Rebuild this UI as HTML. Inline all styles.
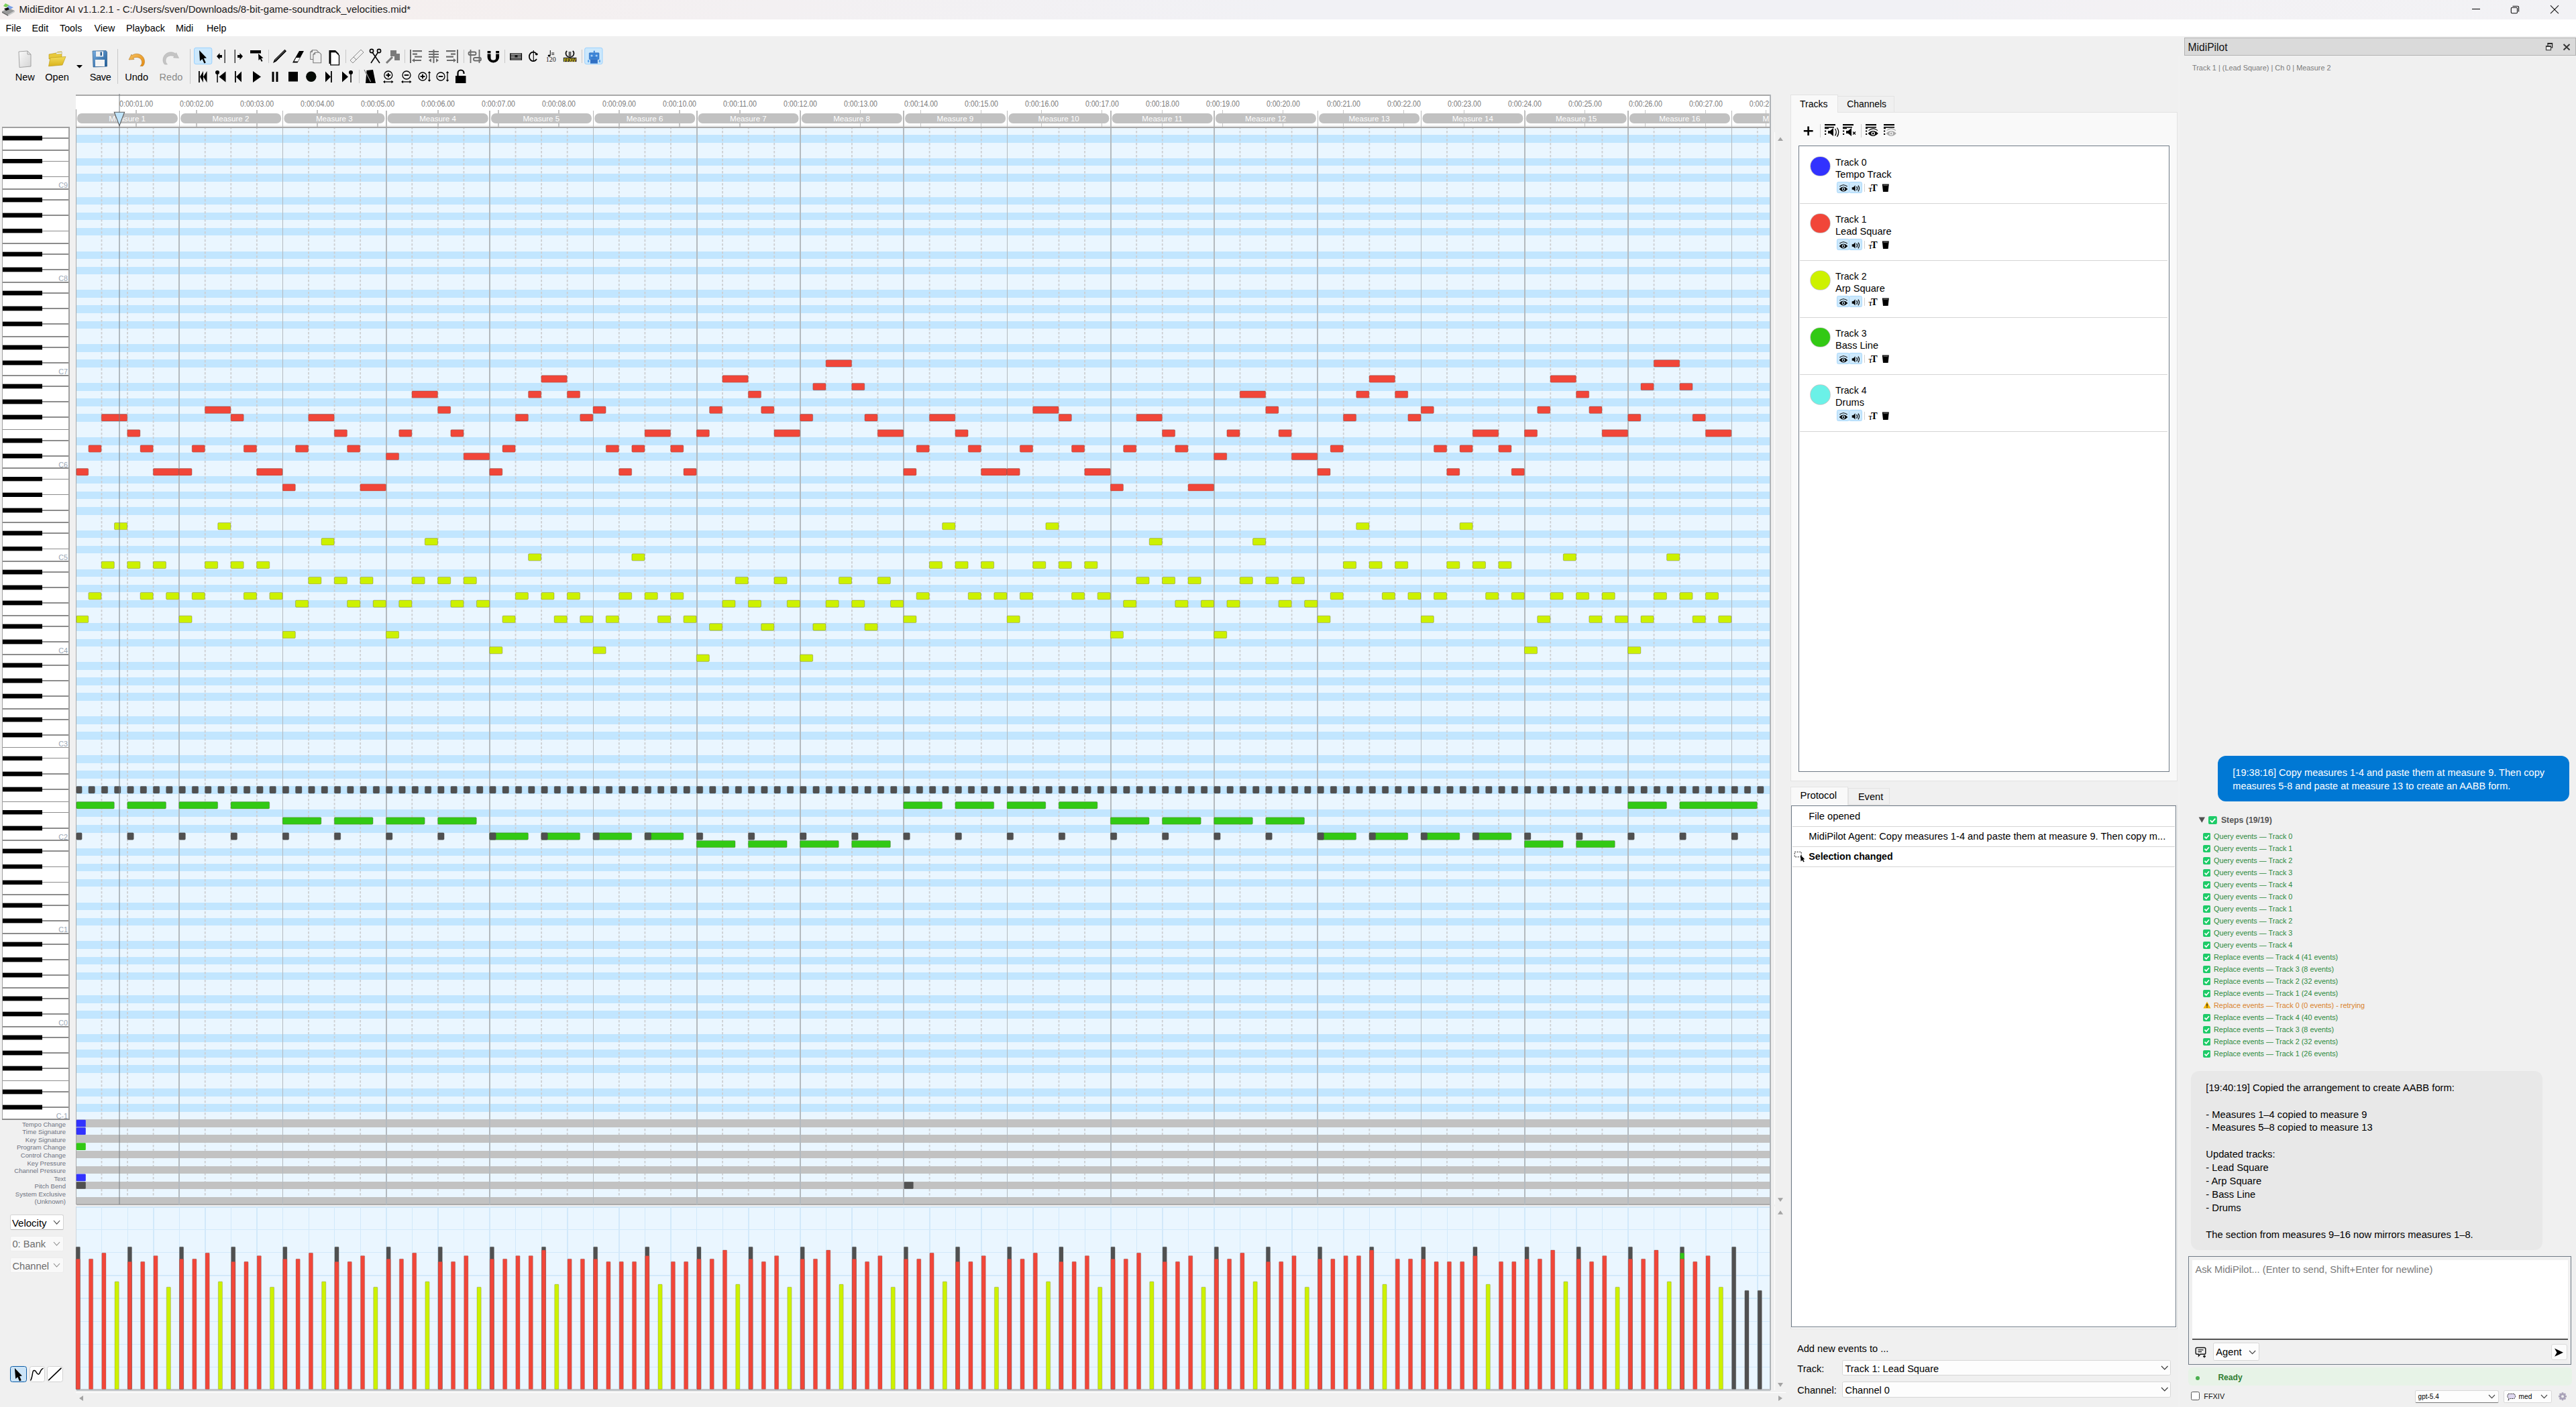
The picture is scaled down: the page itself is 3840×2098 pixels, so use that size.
<!DOCTYPE html><html><head><meta charset="utf-8"><style>
html,body{margin:0;padding:0}
body{width:3840px;height:2098px;overflow:hidden;position:relative;background:#f0f0f0;font-family:"Liberation Sans", sans-serif;}
.a{position:absolute}
.t{position:absolute;white-space:pre;line-height:1}

</style></head><body>
<div class="a" style="left:0;top:0;width:3840px;height:29px;background:linear-gradient(90deg,#f5efee 0%,#f5efee 12%,#f3f0f2 30%,#f1f1f5 50%,#f1f1f5 75%,#f3f1f4 82%,#f2f2f5 100%)"></div>
<div class="a" style="left:0;top:29px;width:3840px;height:25px;background:#ffffff"></div>
<div class="t" style="left:28.4px;top:7.34px;font-size:14.95px;color:#1a1a1a;font-weight:normal;">MidiEditor AI v1.1.2.1 - C:/Users/sven/Downloads/8-bit-game-soundtrack_velocities.mid*</div>
<svg class="a" style="left:1px;top:3px" width="22" height="22" viewBox="0 0 22 22">
<path d="M2,14 L12,9 L21,13 L11,19 Z" fill="#9a9a9a"/><path d="M2,14 L11,19 L11,21 L2,16 Z" fill="#6a6a6a"/><path d="M11,19 L21,13 L21,15 L11,21 Z" fill="#c8c8c8"/>
<path d="M7,2 L13,5 L8,8 L4,6 Z" fill="#7ccf5a"/><path d="M12,5 L19,8 L14,11 L9,9 Z" fill="#7aa0e8"/>
<path d="M5,10 L11,8 L13,11 L8,13 Z" fill="#111"/></svg>
<svg class="a" style="left:3670px;top:0" width="170" height="29" viewBox="3670 0 170 29" fill="none" stroke="#111" stroke-width="1.1">
<line x1="3685" y1="13.5" x2="3697" y2="13.5"/>
<rect x="3743.3" y="11.2" width="9.2" height="8.6" rx="1.5"/><path d="M3745.5,9.2 H3753 a1.6,1.6 0 0 1 1.6,1.6 V17.5"/>
<line x1="3802" y1="8.2" x2="3814" y2="20.2"/><line x1="3814" y1="8.2" x2="3802" y2="20.2"/></svg>
<div class="t" style="left:8.6px;top:35.40px;font-size:14.3px;color:#000;font-weight:normal;">File</div>
<div class="t" style="left:47.5px;top:35.40px;font-size:14.3px;color:#000;font-weight:normal;">Edit</div>
<div class="t" style="left:89.0px;top:35.40px;font-size:14.3px;color:#000;font-weight:normal;">Tools</div>
<div class="t" style="left:140.6px;top:35.40px;font-size:14.3px;color:#000;font-weight:normal;">View</div>
<div class="t" style="left:188.0px;top:35.40px;font-size:14.3px;color:#000;font-weight:normal;">Playback</div>
<div class="t" style="left:262.0px;top:35.40px;font-size:14.3px;color:#000;font-weight:normal;">Midi</div>
<div class="t" style="left:308.0px;top:35.40px;font-size:14.3px;color:#000;font-weight:normal;">Help</div>
<div class="t" style="left:22.7px;top:107.53px;font-size:14.5px;color:#000;font-weight:normal;">New</div>
<div class="t" style="left:67.3px;top:107.53px;font-size:14.5px;color:#000;font-weight:normal;">Open</div>
<div class="t" style="left:133.7px;top:107.53px;font-size:14.5px;color:#000;font-weight:normal;letter-spacing:-0.3px">Save</div>
<div class="t" style="left:186.3px;top:107.53px;font-size:14.5px;color:#000;font-weight:normal;">Undo</div>
<div class="t" style="left:237.6px;top:107.53px;font-size:14.5px;color:#8a8a8a;font-weight:normal;">Redo</div>

<svg class="a" style="left:0;top:54px" width="920" height="76" viewBox="0 54 920 76">
<defs>
<linearGradient id="gpage" x1="0" y1="0" x2="1" y2="1"><stop offset="0" stop-color="#fafafa"/><stop offset="1" stop-color="#d4d4d4"/></linearGradient>
<linearGradient id="gfold" x1="0" y1="0" x2="0" y2="1"><stop offset="0" stop-color="#f3dc5a"/><stop offset="1" stop-color="#d9b21a"/></linearGradient>
<linearGradient id="gsave" x1="0" y1="0" x2="1" y2="1"><stop offset="0" stop-color="#7aaee0"/><stop offset="1" stop-color="#1f5a94"/></linearGradient>
<linearGradient id="gundo" x1="0" y1="0" x2="1" y2="1"><stop offset="0" stop-color="#f6c060"/><stop offset="1" stop-color="#e48a10"/></linearGradient>
</defs>
<path d="M28,77 L41,76 L46,81 L46,99 L29,100.5 Z" fill="url(#gpage)" stroke="#9a9a9a" stroke-width="0.9"/>
<path d="M41,76 L41,81 L46,81" fill="none" stroke="#9a9a9a" stroke-width="0.9"/>
<path d="M73,81 L84,79 L86,77.5 L92,77 L92,86 L73,88 Z" fill="#e8c93a" stroke="#b69414" stroke-width="0.6"/>
<path d="M84,78.5 L92,78 L92,80 L84,80.5 Z" fill="#ffffff" stroke="#9aa" stroke-width="0.4"/>
<path d="M72.5,98.8 L75,86 L98,84.5 L93,97 Z" fill="url(#gfold)" stroke="#b69414" stroke-width="0.6"/>
<path d="M114,97 L123,97 L118.5,101.7 Z" fill="#000"/>
<path d="M138,76 L158,75.5 L159.5,77.5 L159.5,99 L139,100 Z" fill="url(#gsave)" stroke="#1c4f80" stroke-width="0.6"/>
<rect x="143" y="76.5" width="11" height="8" fill="#f0f0f0"/><rect x="149.5" y="77.5" width="2.5" height="5.5" fill="#2b5f92"/>
<rect x="142" y="89" width="14" height="10" fill="#f4f4f4"/>
<path d="M196,81 L192,89 L200,88.5 L198.5,86.5 C204,84 211,86 211.5,92 C212,95 210.5,97 209,98.5 L213,98.5 C216.5,95 216.5,88 212,83.5 C207,79 200,79.5 196.5,83 Z" fill="url(#gundo)" stroke="#a86a10" stroke-width="0.5"/>
<path d="M262.5,78.5 L266.5,86.5 L258.5,86 L260,84 C254.5,81.5 247.5,83.5 247,89.5 C246.5,92.5 248,94.5 249.5,96 L245.5,96 C242,92.5 242,85.5 246.5,81 C251.5,76.5 258.5,77 262,80.5 Z" fill="#c4c4c4" stroke="#a8a8a8" stroke-width="0.5"/>
<g stroke="#c8c8c8" stroke-width="1"><line x1="175.5" y1="73" x2="175.5" y2="125"/><line x1="283.5" y1="73" x2="283.5" y2="125"/>
<line x1="400.5" y1="74" x2="400.5" y2="94"/><line x1="515.5" y1="74" x2="515.5" y2="94"/><line x1="603.5" y1="74" x2="603.5" y2="94"/><line x1="691.5" y1="74" x2="691.5" y2="94"/><line x1="752.5" y1="74" x2="752.5" y2="94"/><line x1="867.5" y1="74" x2="867.5" y2="94"/><line x1="535.5" y1="104" x2="535.5" y2="124"/></g>
<rect x="289.5" y="71.3" width="26.3" height="24.3" rx="2.5" fill="#cce8fc" stroke="#99d1ff" stroke-width="1"/>
<rect x="871.7" y="71.3" width="26.3" height="24.3" rx="2.5" fill="#cce8fc" stroke="#99d1ff" stroke-width="1"/>
<path d="M297,75 L298,91 L301.5,88 L304.5,94.5 L306.8,93.5 L303.8,87 L308,86.5 Z" fill="#000"/>
<path d="M323,84 L327.5,79 L327.5,82 L331,82 L331,86 L327.5,86 L327.5,89 Z" fill="#000"/><rect x="334.5" y="74" width="1.3" height="20" fill="#222"/>
<path d="M362,84 L357.5,79 L357.5,82 L354,82 L354,86 L357.5,86 L357.5,89 Z" fill="#000"/><rect x="349.6" y="74" width="1.3" height="20" fill="#222"/>
<rect x="373" y="75" width="16" height="4.5" fill="#000"/><path d="M385,80 L385.5,90 L387.8,88 L389.8,92 L391.5,91 L389.4,87 L392.5,86.6 Z" fill="#000"/>
<path d="M407,94 L409,89 L424.5,73.8 L427,76.3 L411.5,91.8 Z" fill="#000"/><path d="M410,90 L424.8,75.5" stroke="#f0f0f0" stroke-width="0.6"/>
<path d="M436,93.5 L446,76 L453,76 L443.5,93.5 Z" fill="#000"/><path d="M438.5,91.5 L441.5,86 L447,86 L444,91.5 Z" fill="#fff"/>
<g fill="#f0f0f0" stroke="#7a7a7a" stroke-width="1.1"><path d="M462.8,88.5 V77.5 L465.5,74.8 H472 L474.5,77.5 V88.5 Z"/><path d="M466.9,93.8 V81 L469.6,78.2 H476 L478.6,81 V93.8 Z"/></g><path d="M465.5,74.8 V77.5 H462.8 M469.6,78.2 V81 H466.9" fill="none" stroke="#7a7a7a" stroke-width="1"/>
<path d="M490.5,95 V75 H500 L505,80 V95 Z" fill="#000"/><path d="M492.8,96.8 H505.5 V82.5 L500.5,77.5 H492.8 Z" fill="#fff" stroke="#000" stroke-width="1.3"/>
<path d="M522,90 L538,74 L542,78 L526,94 Z" fill="none" stroke="#8a8a8a" stroke-width="1"/><line x1="527" y1="85" x2="531" y2="89" stroke="#8a8a8a"/>
<g stroke="#000" stroke-width="1.6" fill="none"><line x1="553" y1="94" x2="563.5" y2="78"/><line x1="566" y1="94" x2="555" y2="78"/><circle cx="554" cy="76" r="2.6"/><circle cx="565" cy="76" r="2.6"/></g>
<rect x="582" y="75" width="9" height="9" fill="#7a7a7a"/><rect x="588" y="80" width="8" height="10" fill="#7a7a7a"/><path d="M576,94 L585,85" stroke="#7a7a7a" stroke-width="3"/>
<g fill="#6a6a6a"><rect x="611" y="74" width="2" height="20"/><rect x="615" y="75" width="14" height="2.2"/><rect x="615" y="79.5" width="7" height="2.2"/><rect x="618" y="83.5" width="11" height="2.2"/><path d="M614,90 L618,87 V89 H628 V91 H618 V93 Z"/>
<rect x="645.5" y="74" width="2" height="20"/><rect x="639" y="76" width="15" height="2"/><rect x="639" y="80" width="15" height="2"/><rect x="639" y="84" width="15" height="2"/><path d="M639,90 L643,87 V93 Z M654,90 L650,87 V93 Z"/>
<rect x="681" y="74" width="2" height="20"/><rect x="665" y="75" width="14" height="2.2"/><rect x="672" y="79.5" width="7" height="2.2"/><rect x="665" y="83.5" width="11" height="2.2"/><path d="M680,90 L676,87 V89 H666 V91 H676 V93 Z"/></g>
<g fill="none" stroke="#6a6a6a" stroke-width="1.8"><line x1="701.5" y1="74" x2="701.5" y2="94"/><line x1="714.5" y1="74" x2="714.5" y2="94"/><rect x="698.5" y="77.5" width="11" height="4.5" rx="2"/><rect x="706" y="86" width="11" height="4.5" rx="2"/></g>
<path d="M726.6,76 H731.5 V86 A3.85,3.85 0 0 0 739.2,86 V76 H744.1 V85.2 A8.75,8.2 0 0 1 726.6,85.2 Z" fill="#000"/>
<rect x="726" y="79.3" width="6" height="1.2" fill="#f0f0f0"/><rect x="738.6" y="79.3" width="6" height="1.2" fill="#f0f0f0"/>
<g fill="#000"><rect x="760.5" y="79.5" width="17.5" height="1.2"/><rect x="760.5" y="81.8" width="17.5" height="1.2"/><rect x="760.5" y="84.1" width="17.5" height="1.2"/><rect x="760.5" y="86.4" width="17.5" height="1.2"/><rect x="760.5" y="88.4" width="17.5" height="1.2"/>
<rect x="760.2" y="79.5" width="1.3" height="10"/><rect x="776.8" y="79.5" width="1.3" height="10"/><rect x="767.5" y="83.2" width="4" height="2.2"/></g>
<path d="M799.5,80 A6,6.8 0 1 0 800,88" fill="none" stroke="#000" stroke-width="1.7"/><line x1="795.3" y1="75" x2="795.3" y2="91" stroke="#000" stroke-width="1.1"/><ellipse cx="799.8" cy="80.8" rx="2" ry="1.6" fill="#000"/>
<text x="813.8" y="91.8" font-family="&quot;Liberation Serif&quot;,serif" font-size="10" fill="#222">120</text><path d="M820.3,75 V82.5" stroke="#000" stroke-width="1"/><ellipse cx="818.6" cy="83" rx="2" ry="1.5" fill="#000"/><path d="M822.2,79 h4 M822.2,81.2 h4" stroke="#000" stroke-width="0.9"/>
<path d="M845.2,75.8 C842.5,78 842.5,84.5 849.5,85.2 C856.5,84.5 856.5,78 853.8,75.8" fill="none" stroke="#111" stroke-width="1.7"/><rect x="847.6" y="77" width="3.8" height="8" fill="#777"/><path d="M848.5,77 V85 M850.5,77 V85" stroke="#333" stroke-width="0.5"/>
<rect x="839.8" y="85.8" width="19.6" height="6.3" fill="#222"/><text x="840.6" y="91.6" font-family="&quot;Liberation Sans&quot;,sans-serif" font-size="6.6" font-weight="bold" fill="#e6d41c" textLength="18" lengthAdjust="spacingAndGlyphs">FFXIV</text>
<g><rect x="878.3" y="78.8" width="14.7" height="9.8" rx="0.8" fill="#3d86d9" stroke="#2a64b0" stroke-width="0.6"/><rect x="884.8" y="75.5" width="2" height="3.5" rx="0.8" fill="#3d86d9"/><circle cx="882" cy="83" r="1.6" fill="#a9cdf2"/><circle cx="889.2" cy="83" r="1.6" fill="#a9cdf2"/><rect x="881.5" y="85.8" width="8" height="0.8" fill="#2a64b0"/>
<rect x="880" y="88.6" width="10.9" height="6" fill="#2f6fc4"/><rect x="876" y="89.2" width="2.5" height="3.8" rx="0.8" fill="#62a8ec"/><rect x="892.6" y="89.2" width="2.5" height="3.8" rx="0.8" fill="#62a8ec"/></g>
<g fill="#000">
<rect x="296" y="106" width="1.8" height="17"/><path d="M298,114.5 L303,106 V123 Z M303,114.5 L308.5,106 V123 Z"/>
<circle cx="324" cy="108" r="3"/><rect x="323.3" y="108" width="1.5" height="15"/><path d="M326.5,114.5 L336.5,106.5 V122.5 Z"/>
<rect x="350" y="106" width="1.8" height="17"/><path d="M352,114.5 L360,106.5 V122.5 Z"/>
<path d="M377,106 L389,114.5 L377,123 Z"/>
<rect x="405.5" y="107" width="3" height="15" rx="0.6"/><rect x="411.5" y="107" width="3" height="15" rx="0.6"/>
<rect x="430" y="107" width="14" height="14.5"/>
<circle cx="463.8" cy="114.3" r="7.7" fill="#050a05"/>
<path d="M485,106.5 L493,114.5 L485,122.5 Z"/><rect x="493" y="106" width="1.8" height="17"/>
<path d="M510,106.5 L519,114.5 L510,122.5 Z"/><circle cx="523" cy="108" r="3"/><rect x="522.3" y="108" width="1.5" height="15"/>
<path d="M546.5,105 L556,104 L560,124 L545,124 Z"/></g>
<path d="M543.5,104.5 L552.5,122" stroke="#f0f0f0" stroke-width="1.2"/><path d="M543,104 L552,122" stroke="#000" stroke-width="0.6"/>
<g fill="none" stroke="#000" stroke-width="1.3">
<circle cx="578.8" cy="112" r="6"/><path d="M575.5,112 h6.6 M578.8,108.7 v6.6" stroke-width="1.9"/><path d="M572.5,122 h12.5"/>
<circle cx="606" cy="112" r="6"/><path d="M602.7,112 h6.6" stroke-width="1.9"/><path d="M599.5,122 h12.5"/>
<circle cx="630" cy="114" r="6"/><path d="M626.7,114 h6.6 M630,110.7 v6.6" stroke-width="1.9"/><path d="M640,108 v12"/>
<circle cx="657" cy="114" r="6"/><path d="M653.7,114 h6.6" stroke-width="1.9"/><path d="M667,108 v12"/></g>
<g fill="#000"><path d="M571,122 l3,-2.2 v4.4 Z M586.5,122 l-3,-2.2 v4.4 Z M598,122 l3,-2.2 v4.4 Z M613.5,122 l-3,-2.2 v4.4 Z M640,106 l-2.2,3 h4.4 Z M640,122 l-2.2,-3 h4.4 Z M667,106 l-2.2,3 h4.4 Z M667,122 l-2.2,-3 h4.4 Z"/>
<rect x="679" y="113" width="15.5" height="11"/></g>
<path d="M682.5,113 V109 A4.5,4.5 0 0 1 691.5,109 V110" fill="none" stroke="#000" stroke-width="2.2"/>
</svg>
<svg class="a" style="left:0;top:0" width="2670" height="2098" viewBox="0 0 2670 2098">
<g shape-rendering="crispEdges">
<rect x="113" y="141" width="2526.6" height="50" fill="#ffffff"/>
<rect x="113" y="186.5" width="2525.6" height="3" fill="#ededed"/>
<rect x="113" y="141" width="2526.6" height="2" fill="#a9a9a9"/>
<rect x="113" y="163" width="1.2" height="28" fill="#a0a0a0"/>
<rect x="2637.6" y="141" width="2" height="1931.6" fill="#b0b4b8"/>
</g>
<g shape-rendering="crispEdges">
<rect x="266.57" y="164.5" width="1.6" height="26" fill="#b9b9b9"/>
<rect x="420.84" y="164.5" width="1.6" height="26" fill="#b9b9b9"/>
<rect x="575.12" y="164.5" width="1.6" height="26" fill="#b9b9b9"/>
<rect x="729.39" y="164.5" width="1.6" height="26" fill="#b9b9b9"/>
<rect x="883.66" y="164.5" width="1.6" height="26" fill="#b9b9b9"/>
<rect x="1037.93" y="164.5" width="1.6" height="26" fill="#b9b9b9"/>
<rect x="1192.20" y="164.5" width="1.6" height="26" fill="#b9b9b9"/>
<rect x="1346.48" y="164.5" width="1.6" height="26" fill="#b9b9b9"/>
<rect x="1500.75" y="164.5" width="1.6" height="26" fill="#b9b9b9"/>
<rect x="1655.02" y="164.5" width="1.6" height="26" fill="#b9b9b9"/>
<rect x="1809.29" y="164.5" width="1.6" height="26" fill="#b9b9b9"/>
<rect x="1963.56" y="164.5" width="1.6" height="26" fill="#b9b9b9"/>
<rect x="2117.84" y="164.5" width="1.6" height="26" fill="#b9b9b9"/>
<rect x="2272.11" y="164.5" width="1.6" height="26" fill="#b9b9b9"/>
<rect x="2426.38" y="164.5" width="1.6" height="26" fill="#b9b9b9"/>
<rect x="2580.65" y="164.5" width="1.6" height="26" fill="#b9b9b9"/>
<rect x="201.99" y="163.5" width="1.6" height="27" fill="#c4c4c4"/>
<rect x="291.98" y="163.5" width="1.6" height="27" fill="#c4c4c4"/>
<rect x="381.97" y="163.5" width="1.6" height="27" fill="#c4c4c4"/>
<rect x="471.96" y="163.5" width="1.6" height="27" fill="#c4c4c4"/>
<rect x="561.95" y="163.5" width="1.6" height="27" fill="#c4c4c4"/>
<rect x="651.95" y="163.5" width="1.6" height="27" fill="#c4c4c4"/>
<rect x="741.94" y="163.5" width="1.6" height="27" fill="#c4c4c4"/>
<rect x="831.93" y="163.5" width="1.6" height="27" fill="#c4c4c4"/>
<rect x="921.92" y="163.5" width="1.6" height="27" fill="#c4c4c4"/>
<rect x="1011.91" y="163.5" width="1.6" height="27" fill="#c4c4c4"/>
<rect x="1101.90" y="163.5" width="1.6" height="27" fill="#c4c4c4"/>
<rect x="1191.89" y="163.5" width="1.6" height="27" fill="#c4c4c4"/>
<rect x="1281.88" y="163.5" width="1.6" height="27" fill="#c4c4c4"/>
<rect x="1371.87" y="163.5" width="1.6" height="27" fill="#c4c4c4"/>
<rect x="1461.86" y="163.5" width="1.6" height="27" fill="#c4c4c4"/>
<rect x="1551.85" y="163.5" width="1.6" height="27" fill="#c4c4c4"/>
<rect x="1641.84" y="163.5" width="1.6" height="27" fill="#c4c4c4"/>
<rect x="1731.84" y="163.5" width="1.6" height="27" fill="#c4c4c4"/>
<rect x="1821.83" y="163.5" width="1.6" height="27" fill="#c4c4c4"/>
<rect x="1911.82" y="163.5" width="1.6" height="27" fill="#c4c4c4"/>
<rect x="2001.81" y="163.5" width="1.6" height="27" fill="#c4c4c4"/>
<rect x="2091.80" y="163.5" width="1.6" height="27" fill="#c4c4c4"/>
<rect x="2181.79" y="163.5" width="1.6" height="27" fill="#c4c4c4"/>
<rect x="2271.78" y="163.5" width="1.6" height="27" fill="#c4c4c4"/>
<rect x="2361.77" y="163.5" width="1.6" height="27" fill="#c4c4c4"/>
<rect x="2451.76" y="163.5" width="1.6" height="27" fill="#c4c4c4"/>
<rect x="2541.75" y="163.5" width="1.6" height="27" fill="#c4c4c4"/>
<rect x="2631.74" y="163.5" width="1.6" height="27" fill="#c4c4c4"/>
</g>
<rect x="114.90" y="169" width="149.97" height="15" rx="7" fill="#c1c1c1"/>
<rect x="269.17" y="169" width="149.97" height="15" rx="7" fill="#c1c1c1"/>
<rect x="423.44" y="169" width="149.97" height="15" rx="7" fill="#c1c1c1"/>
<rect x="577.72" y="169" width="149.97" height="15" rx="7" fill="#c1c1c1"/>
<rect x="731.99" y="169" width="149.97" height="15" rx="7" fill="#c1c1c1"/>
<rect x="886.26" y="169" width="149.97" height="15" rx="7" fill="#c1c1c1"/>
<rect x="1040.53" y="169" width="149.97" height="15" rx="7" fill="#c1c1c1"/>
<rect x="1194.80" y="169" width="149.97" height="15" rx="7" fill="#c1c1c1"/>
<rect x="1349.08" y="169" width="149.97" height="15" rx="7" fill="#c1c1c1"/>
<rect x="1503.35" y="169" width="149.97" height="15" rx="7" fill="#c1c1c1"/>
<rect x="1657.62" y="169" width="149.97" height="15" rx="7" fill="#c1c1c1"/>
<rect x="1811.89" y="169" width="149.97" height="15" rx="7" fill="#c1c1c1"/>
<rect x="1966.16" y="169" width="149.97" height="15" rx="7" fill="#c1c1c1"/>
<rect x="2120.44" y="169" width="149.97" height="15" rx="7" fill="#c1c1c1"/>
<rect x="2274.71" y="169" width="149.97" height="15" rx="7" fill="#c1c1c1"/>
<rect x="2428.98" y="169" width="149.97" height="15" rx="7" fill="#c1c1c1"/>
<path d="M2590.25,169 H2637.60 V184 H2590.25 A7,7.5 0 0 1 2590.25,169 Z" fill="#c1c1c1"/>
<defs><clipPath id="rclip"><rect x="113" y="140" width="2524.1" height="52"/></clipPath></defs>
<g font-family="&quot;Liberation Sans&quot;, sans-serif" font-size="11.6" fill="#ffffff" text-anchor="middle" clip-path="url(#rclip)">
<text x="189.7" y="180.5">Measure 1</text>
<text x="344.0" y="180.5">Measure 2</text>
<text x="498.3" y="180.5">Measure 3</text>
<text x="652.6" y="180.5">Measure 4</text>
<text x="806.8" y="180.5">Measure 5</text>
<text x="961.1" y="180.5">Measure 6</text>
<text x="1115.4" y="180.5">Measure 7</text>
<text x="1269.6" y="180.5">Measure 8</text>
<text x="1423.9" y="180.5">Measure 9</text>
<text x="1578.2" y="180.5">Measure 10</text>
<text x="1732.5" y="180.5">Measure 11</text>
<text x="1886.7" y="180.5">Measure 12</text>
<text x="2041.0" y="180.5">Measure 13</text>
<text x="2195.3" y="180.5">Measure 14</text>
<text x="2349.5" y="180.5">Measure 15</text>
<text x="2503.8" y="180.5">Measure 16</text>
<text x="2658.1" y="180.5">Measure 17</text>
</g>
<g font-family="&quot;Liberation Sans&quot;, sans-serif" font-size="12.4" fill="#7a7a7a">
<text x="178.1" y="158.9" textLength="50" lengthAdjust="spacingAndGlyphs">0:00:01.00</text>
<text x="268.1" y="158.9" textLength="50" lengthAdjust="spacingAndGlyphs">0:00:02.00</text>
<text x="358.1" y="158.9" textLength="50" lengthAdjust="spacingAndGlyphs">0:00:03.00</text>
<text x="448.1" y="158.9" textLength="50" lengthAdjust="spacingAndGlyphs">0:00:04.00</text>
<text x="538.1" y="158.9" textLength="50" lengthAdjust="spacingAndGlyphs">0:00:05.00</text>
<text x="628.0" y="158.9" textLength="50" lengthAdjust="spacingAndGlyphs">0:00:06.00</text>
<text x="718.0" y="158.9" textLength="50" lengthAdjust="spacingAndGlyphs">0:00:07.00</text>
<text x="808.0" y="158.9" textLength="50" lengthAdjust="spacingAndGlyphs">0:00:08.00</text>
<text x="898.0" y="158.9" textLength="50" lengthAdjust="spacingAndGlyphs">0:00:09.00</text>
<text x="988.0" y="158.9" textLength="50" lengthAdjust="spacingAndGlyphs">0:00:10.00</text>
<text x="1078.0" y="158.9" textLength="50" lengthAdjust="spacingAndGlyphs">0:00:11.00</text>
<text x="1168.0" y="158.9" textLength="50" lengthAdjust="spacingAndGlyphs">0:00:12.00</text>
<text x="1258.0" y="158.9" textLength="50" lengthAdjust="spacingAndGlyphs">0:00:13.00</text>
<text x="1348.0" y="158.9" textLength="50" lengthAdjust="spacingAndGlyphs">0:00:14.00</text>
<text x="1438.0" y="158.9" textLength="50" lengthAdjust="spacingAndGlyphs">0:00:15.00</text>
<text x="1528.0" y="158.9" textLength="50" lengthAdjust="spacingAndGlyphs">0:00:16.00</text>
<text x="1617.9" y="158.9" textLength="50" lengthAdjust="spacingAndGlyphs">0:00:17.00</text>
<text x="1707.9" y="158.9" textLength="50" lengthAdjust="spacingAndGlyphs">0:00:18.00</text>
<text x="1797.9" y="158.9" textLength="50" lengthAdjust="spacingAndGlyphs">0:00:19.00</text>
<text x="1887.9" y="158.9" textLength="50" lengthAdjust="spacingAndGlyphs">0:00:20.00</text>
<text x="1977.9" y="158.9" textLength="50" lengthAdjust="spacingAndGlyphs">0:00:21.00</text>
<text x="2067.9" y="158.9" textLength="50" lengthAdjust="spacingAndGlyphs">0:00:22.00</text>
<text x="2157.9" y="158.9" textLength="50" lengthAdjust="spacingAndGlyphs">0:00:23.00</text>
<text x="2247.9" y="158.9" textLength="50" lengthAdjust="spacingAndGlyphs">0:00:24.00</text>
<text x="2337.9" y="158.9" textLength="50" lengthAdjust="spacingAndGlyphs">0:00:25.00</text>
<text x="2427.9" y="158.9" textLength="50" lengthAdjust="spacingAndGlyphs">0:00:26.00</text>
<text x="2517.9" y="158.9" textLength="50" lengthAdjust="spacingAndGlyphs">0:00:27.00</text>
<svg x="2607.8" y="141" width="29.8" height="30" overflow="hidden"><text x="0" y="17.9" textLength="50" lengthAdjust="spacingAndGlyphs">0:00:28.00</text></svg>
</g>
<g shape-rendering="crispEdges">
<rect x="3" y="189.5" width="100.5" height="1479.8" fill="#ffffff"/>
<rect x="3" y="204.86" width="100" height="1.8" fill="#8c8c8c"/>
<rect x="3" y="223.48" width="100" height="1.8" fill="#8c8c8c"/>
<rect x="3" y="239.54" width="100" height="1.8" fill="#8c8c8c"/>
<rect x="3" y="262.66" width="100" height="1.8" fill="#8c8c8c"/>
<rect x="3" y="281.28" width="100" height="1.8" fill="#8c8c8c"/>
<rect x="3" y="297.34" width="100" height="1.8" fill="#8c8c8c"/>
<rect x="3" y="320.46" width="100" height="1.8" fill="#8c8c8c"/>
<rect x="3" y="343.58" width="100" height="1.8" fill="#8c8c8c"/>
<rect x="3" y="362.20" width="100" height="1.8" fill="#8c8c8c"/>
<rect x="3" y="378.26" width="100" height="1.8" fill="#8c8c8c"/>
<rect x="3" y="401.38" width="100" height="1.8" fill="#8c8c8c"/>
<rect x="3" y="420.00" width="100" height="1.8" fill="#8c8c8c"/>
<rect x="3" y="436.06" width="100" height="1.8" fill="#8c8c8c"/>
<rect x="3" y="459.18" width="100" height="1.8" fill="#8c8c8c"/>
<rect x="3" y="482.30" width="100" height="1.8" fill="#8c8c8c"/>
<rect x="3" y="500.92" width="100" height="1.8" fill="#8c8c8c"/>
<rect x="3" y="516.98" width="100" height="1.8" fill="#8c8c8c"/>
<rect x="3" y="540.10" width="100" height="1.8" fill="#8c8c8c"/>
<rect x="3" y="558.72" width="100" height="1.8" fill="#8c8c8c"/>
<rect x="3" y="574.78" width="100" height="1.8" fill="#8c8c8c"/>
<rect x="3" y="597.90" width="100" height="1.8" fill="#8c8c8c"/>
<rect x="3" y="621.02" width="100" height="1.8" fill="#8c8c8c"/>
<rect x="3" y="639.64" width="100" height="1.8" fill="#8c8c8c"/>
<rect x="3" y="655.70" width="100" height="1.8" fill="#8c8c8c"/>
<rect x="3" y="678.82" width="100" height="1.8" fill="#8c8c8c"/>
<rect x="3" y="697.44" width="100" height="1.8" fill="#8c8c8c"/>
<rect x="3" y="713.50" width="100" height="1.8" fill="#8c8c8c"/>
<rect x="3" y="736.62" width="100" height="1.8" fill="#8c8c8c"/>
<rect x="3" y="759.74" width="100" height="1.8" fill="#8c8c8c"/>
<rect x="3" y="778.36" width="100" height="1.8" fill="#8c8c8c"/>
<rect x="3" y="794.42" width="100" height="1.8" fill="#8c8c8c"/>
<rect x="3" y="817.54" width="100" height="1.8" fill="#8c8c8c"/>
<rect x="3" y="836.16" width="100" height="1.8" fill="#8c8c8c"/>
<rect x="3" y="852.22" width="100" height="1.8" fill="#8c8c8c"/>
<rect x="3" y="875.34" width="100" height="1.8" fill="#8c8c8c"/>
<rect x="3" y="898.46" width="100" height="1.8" fill="#8c8c8c"/>
<rect x="3" y="917.08" width="100" height="1.8" fill="#8c8c8c"/>
<rect x="3" y="933.14" width="100" height="1.8" fill="#8c8c8c"/>
<rect x="3" y="956.26" width="100" height="1.8" fill="#8c8c8c"/>
<rect x="3" y="974.88" width="100" height="1.8" fill="#8c8c8c"/>
<rect x="3" y="990.94" width="100" height="1.8" fill="#8c8c8c"/>
<rect x="3" y="1014.06" width="100" height="1.8" fill="#8c8c8c"/>
<rect x="3" y="1037.18" width="100" height="1.8" fill="#8c8c8c"/>
<rect x="3" y="1055.80" width="100" height="1.8" fill="#8c8c8c"/>
<rect x="3" y="1071.86" width="100" height="1.8" fill="#8c8c8c"/>
<rect x="3" y="1094.98" width="100" height="1.8" fill="#8c8c8c"/>
<rect x="3" y="1113.60" width="100" height="1.8" fill="#8c8c8c"/>
<rect x="3" y="1129.66" width="100" height="1.8" fill="#8c8c8c"/>
<rect x="3" y="1152.78" width="100" height="1.8" fill="#8c8c8c"/>
<rect x="3" y="1175.90" width="100" height="1.8" fill="#8c8c8c"/>
<rect x="3" y="1194.52" width="100" height="1.8" fill="#8c8c8c"/>
<rect x="3" y="1210.58" width="100" height="1.8" fill="#8c8c8c"/>
<rect x="3" y="1233.70" width="100" height="1.8" fill="#8c8c8c"/>
<rect x="3" y="1252.32" width="100" height="1.8" fill="#8c8c8c"/>
<rect x="3" y="1268.38" width="100" height="1.8" fill="#8c8c8c"/>
<rect x="3" y="1291.50" width="100" height="1.8" fill="#8c8c8c"/>
<rect x="3" y="1314.62" width="100" height="1.8" fill="#8c8c8c"/>
<rect x="3" y="1333.24" width="100" height="1.8" fill="#8c8c8c"/>
<rect x="3" y="1349.30" width="100" height="1.8" fill="#8c8c8c"/>
<rect x="3" y="1372.42" width="100" height="1.8" fill="#8c8c8c"/>
<rect x="3" y="1391.04" width="100" height="1.8" fill="#8c8c8c"/>
<rect x="3" y="1407.10" width="100" height="1.8" fill="#8c8c8c"/>
<rect x="3" y="1430.22" width="100" height="1.8" fill="#8c8c8c"/>
<rect x="3" y="1453.34" width="100" height="1.8" fill="#8c8c8c"/>
<rect x="3" y="1471.96" width="100" height="1.8" fill="#8c8c8c"/>
<rect x="3" y="1488.02" width="100" height="1.8" fill="#8c8c8c"/>
<rect x="3" y="1511.14" width="100" height="1.8" fill="#8c8c8c"/>
<rect x="3" y="1529.76" width="100" height="1.8" fill="#8c8c8c"/>
<rect x="3" y="1545.82" width="100" height="1.8" fill="#8c8c8c"/>
<rect x="3" y="1568.94" width="100" height="1.8" fill="#8c8c8c"/>
<rect x="3" y="1592.06" width="100" height="1.8" fill="#8c8c8c"/>
<rect x="3" y="1610.68" width="100" height="1.8" fill="#8c8c8c"/>
<rect x="3" y="1626.74" width="100" height="1.8" fill="#8c8c8c"/>
<rect x="3" y="1649.86" width="100" height="1.8" fill="#8c8c8c"/>
<rect x="3" y="1668.48" width="100" height="1.8" fill="#8c8c8c"/>
<rect x="3" y="201.86" width="60" height="7.8" fill="#9a9a9a"/>
<rect x="3" y="202.76" width="60" height="6" fill="#000000"/>
<rect x="3" y="236.54" width="60" height="7.8" fill="#9a9a9a"/>
<rect x="3" y="237.44" width="60" height="6" fill="#000000"/>
<rect x="3" y="259.66" width="60" height="7.8" fill="#9a9a9a"/>
<rect x="3" y="260.56" width="60" height="6" fill="#000000"/>
<rect x="3" y="294.34" width="60" height="7.8" fill="#9a9a9a"/>
<rect x="3" y="295.24" width="60" height="6" fill="#000000"/>
<rect x="3" y="317.46" width="60" height="7.8" fill="#9a9a9a"/>
<rect x="3" y="318.36" width="60" height="6" fill="#000000"/>
<rect x="3" y="340.58" width="60" height="7.8" fill="#9a9a9a"/>
<rect x="3" y="341.48" width="60" height="6" fill="#000000"/>
<rect x="3" y="375.26" width="60" height="7.8" fill="#9a9a9a"/>
<rect x="3" y="376.16" width="60" height="6" fill="#000000"/>
<rect x="3" y="398.38" width="60" height="7.8" fill="#9a9a9a"/>
<rect x="3" y="399.28" width="60" height="6" fill="#000000"/>
<rect x="3" y="433.06" width="60" height="7.8" fill="#9a9a9a"/>
<rect x="3" y="433.96" width="60" height="6" fill="#000000"/>
<rect x="3" y="456.18" width="60" height="7.8" fill="#9a9a9a"/>
<rect x="3" y="457.08" width="60" height="6" fill="#000000"/>
<rect x="3" y="479.30" width="60" height="7.8" fill="#9a9a9a"/>
<rect x="3" y="480.20" width="60" height="6" fill="#000000"/>
<rect x="3" y="513.98" width="60" height="7.8" fill="#9a9a9a"/>
<rect x="3" y="514.88" width="60" height="6" fill="#000000"/>
<rect x="3" y="537.10" width="60" height="7.8" fill="#9a9a9a"/>
<rect x="3" y="538.00" width="60" height="6" fill="#000000"/>
<rect x="3" y="571.78" width="60" height="7.8" fill="#9a9a9a"/>
<rect x="3" y="572.68" width="60" height="6" fill="#000000"/>
<rect x="3" y="594.90" width="60" height="7.8" fill="#9a9a9a"/>
<rect x="3" y="595.80" width="60" height="6" fill="#000000"/>
<rect x="3" y="618.02" width="60" height="7.8" fill="#9a9a9a"/>
<rect x="3" y="618.92" width="60" height="6" fill="#000000"/>
<rect x="3" y="652.70" width="60" height="7.8" fill="#9a9a9a"/>
<rect x="3" y="653.60" width="60" height="6" fill="#000000"/>
<rect x="3" y="675.82" width="60" height="7.8" fill="#9a9a9a"/>
<rect x="3" y="676.72" width="60" height="6" fill="#000000"/>
<rect x="3" y="710.50" width="60" height="7.8" fill="#9a9a9a"/>
<rect x="3" y="711.40" width="60" height="6" fill="#000000"/>
<rect x="3" y="733.62" width="60" height="7.8" fill="#9a9a9a"/>
<rect x="3" y="734.52" width="60" height="6" fill="#000000"/>
<rect x="3" y="756.74" width="60" height="7.8" fill="#9a9a9a"/>
<rect x="3" y="757.64" width="60" height="6" fill="#000000"/>
<rect x="3" y="791.42" width="60" height="7.8" fill="#9a9a9a"/>
<rect x="3" y="792.32" width="60" height="6" fill="#000000"/>
<rect x="3" y="814.54" width="60" height="7.8" fill="#9a9a9a"/>
<rect x="3" y="815.44" width="60" height="6" fill="#000000"/>
<rect x="3" y="849.22" width="60" height="7.8" fill="#9a9a9a"/>
<rect x="3" y="850.12" width="60" height="6" fill="#000000"/>
<rect x="3" y="872.34" width="60" height="7.8" fill="#9a9a9a"/>
<rect x="3" y="873.24" width="60" height="6" fill="#000000"/>
<rect x="3" y="895.46" width="60" height="7.8" fill="#9a9a9a"/>
<rect x="3" y="896.36" width="60" height="6" fill="#000000"/>
<rect x="3" y="930.14" width="60" height="7.8" fill="#9a9a9a"/>
<rect x="3" y="931.04" width="60" height="6" fill="#000000"/>
<rect x="3" y="953.26" width="60" height="7.8" fill="#9a9a9a"/>
<rect x="3" y="954.16" width="60" height="6" fill="#000000"/>
<rect x="3" y="987.94" width="60" height="7.8" fill="#9a9a9a"/>
<rect x="3" y="988.84" width="60" height="6" fill="#000000"/>
<rect x="3" y="1011.06" width="60" height="7.8" fill="#9a9a9a"/>
<rect x="3" y="1011.96" width="60" height="6" fill="#000000"/>
<rect x="3" y="1034.18" width="60" height="7.8" fill="#9a9a9a"/>
<rect x="3" y="1035.08" width="60" height="6" fill="#000000"/>
<rect x="3" y="1068.86" width="60" height="7.8" fill="#9a9a9a"/>
<rect x="3" y="1069.76" width="60" height="6" fill="#000000"/>
<rect x="3" y="1091.98" width="60" height="7.8" fill="#9a9a9a"/>
<rect x="3" y="1092.88" width="60" height="6" fill="#000000"/>
<rect x="3" y="1126.66" width="60" height="7.8" fill="#9a9a9a"/>
<rect x="3" y="1127.56" width="60" height="6" fill="#000000"/>
<rect x="3" y="1149.78" width="60" height="7.8" fill="#9a9a9a"/>
<rect x="3" y="1150.68" width="60" height="6" fill="#000000"/>
<rect x="3" y="1172.90" width="60" height="7.8" fill="#9a9a9a"/>
<rect x="3" y="1173.80" width="60" height="6" fill="#000000"/>
<rect x="3" y="1207.58" width="60" height="7.8" fill="#9a9a9a"/>
<rect x="3" y="1208.48" width="60" height="6" fill="#000000"/>
<rect x="3" y="1230.70" width="60" height="7.8" fill="#9a9a9a"/>
<rect x="3" y="1231.60" width="60" height="6" fill="#000000"/>
<rect x="3" y="1265.38" width="60" height="7.8" fill="#9a9a9a"/>
<rect x="3" y="1266.28" width="60" height="6" fill="#000000"/>
<rect x="3" y="1288.50" width="60" height="7.8" fill="#9a9a9a"/>
<rect x="3" y="1289.40" width="60" height="6" fill="#000000"/>
<rect x="3" y="1311.62" width="60" height="7.8" fill="#9a9a9a"/>
<rect x="3" y="1312.52" width="60" height="6" fill="#000000"/>
<rect x="3" y="1346.30" width="60" height="7.8" fill="#9a9a9a"/>
<rect x="3" y="1347.20" width="60" height="6" fill="#000000"/>
<rect x="3" y="1369.42" width="60" height="7.8" fill="#9a9a9a"/>
<rect x="3" y="1370.32" width="60" height="6" fill="#000000"/>
<rect x="3" y="1404.10" width="60" height="7.8" fill="#9a9a9a"/>
<rect x="3" y="1405.00" width="60" height="6" fill="#000000"/>
<rect x="3" y="1427.22" width="60" height="7.8" fill="#9a9a9a"/>
<rect x="3" y="1428.12" width="60" height="6" fill="#000000"/>
<rect x="3" y="1450.34" width="60" height="7.8" fill="#9a9a9a"/>
<rect x="3" y="1451.24" width="60" height="6" fill="#000000"/>
<rect x="3" y="1485.02" width="60" height="7.8" fill="#9a9a9a"/>
<rect x="3" y="1485.92" width="60" height="6" fill="#000000"/>
<rect x="3" y="1508.14" width="60" height="7.8" fill="#9a9a9a"/>
<rect x="3" y="1509.04" width="60" height="6" fill="#000000"/>
<rect x="3" y="1542.82" width="60" height="7.8" fill="#9a9a9a"/>
<rect x="3" y="1543.72" width="60" height="6" fill="#000000"/>
<rect x="3" y="1565.94" width="60" height="7.8" fill="#9a9a9a"/>
<rect x="3" y="1566.84" width="60" height="6" fill="#000000"/>
<rect x="3" y="1589.06" width="60" height="7.8" fill="#9a9a9a"/>
<rect x="3" y="1589.96" width="60" height="6" fill="#000000"/>
<rect x="3" y="1623.74" width="60" height="7.8" fill="#9a9a9a"/>
<rect x="3" y="1624.64" width="60" height="6" fill="#000000"/>
<rect x="3" y="1646.86" width="60" height="7.8" fill="#9a9a9a"/>
<rect x="3" y="1647.76" width="60" height="6" fill="#000000"/>
<rect x="3" y="189.5" width="1.3" height="1479.8" fill="#a0a0a0"/>
<rect x="102.2" y="189.5" width="1.6" height="1479.8" fill="#a0a0a0"/>
<rect x="3" y="1668.28" width="100.8" height="2" fill="#8c8c8c"/>
<rect x="3" y="189" width="100.8" height="1.5" fill="#a0a0a0"/>
</g>
<g font-family="&quot;Liberation Sans&quot;, sans-serif" font-size="10.8" fill="#9aa6b4" text-anchor="end">
<text x="101.1" y="280.48">C9</text>
<text x="101.1" y="419.20">C8</text>
<text x="101.1" y="557.92">C7</text>
<text x="101.1" y="696.64">C6</text>
<text x="101.1" y="835.36">C5</text>
<text x="101.1" y="974.08">C4</text>
<text x="101.1" y="1112.80">C3</text>
<text x="101.1" y="1251.52">C2</text>
<text x="101.1" y="1390.24">C1</text>
<text x="101.1" y="1528.96">C0</text>
<text x="101.1" y="1667.68">C-1</text>
</g>
<g shape-rendering="crispEdges">
<rect x="113.5" y="190.5" width="2524.1" height="1478.8" fill="#eaf6ff"/>
<rect x="113.5" y="201.16" width="2524.1" height="11.56" fill="#c2e6ff"/>
<rect x="113.5" y="235.84" width="2524.1" height="11.56" fill="#c2e6ff"/>
<rect x="113.5" y="258.96" width="2524.1" height="11.56" fill="#c2e6ff"/>
<rect x="113.5" y="293.64" width="2524.1" height="11.56" fill="#c2e6ff"/>
<rect x="113.5" y="316.76" width="2524.1" height="11.56" fill="#c2e6ff"/>
<rect x="113.5" y="339.88" width="2524.1" height="11.56" fill="#c2e6ff"/>
<rect x="113.5" y="374.56" width="2524.1" height="11.56" fill="#c2e6ff"/>
<rect x="113.5" y="397.68" width="2524.1" height="11.56" fill="#c2e6ff"/>
<rect x="113.5" y="432.36" width="2524.1" height="11.56" fill="#c2e6ff"/>
<rect x="113.5" y="455.48" width="2524.1" height="11.56" fill="#c2e6ff"/>
<rect x="113.5" y="478.60" width="2524.1" height="11.56" fill="#c2e6ff"/>
<rect x="113.5" y="513.28" width="2524.1" height="11.56" fill="#c2e6ff"/>
<rect x="113.5" y="536.40" width="2524.1" height="11.56" fill="#c2e6ff"/>
<rect x="113.5" y="571.08" width="2524.1" height="11.56" fill="#c2e6ff"/>
<rect x="113.5" y="594.20" width="2524.1" height="11.56" fill="#c2e6ff"/>
<rect x="113.5" y="617.32" width="2524.1" height="11.56" fill="#c2e6ff"/>
<rect x="113.5" y="652.00" width="2524.1" height="11.56" fill="#c2e6ff"/>
<rect x="113.5" y="675.12" width="2524.1" height="11.56" fill="#c2e6ff"/>
<rect x="113.5" y="709.80" width="2524.1" height="11.56" fill="#c2e6ff"/>
<rect x="113.5" y="732.92" width="2524.1" height="11.56" fill="#c2e6ff"/>
<rect x="113.5" y="756.04" width="2524.1" height="11.56" fill="#c2e6ff"/>
<rect x="113.5" y="790.72" width="2524.1" height="11.56" fill="#c2e6ff"/>
<rect x="113.5" y="813.84" width="2524.1" height="11.56" fill="#c2e6ff"/>
<rect x="113.5" y="848.52" width="2524.1" height="11.56" fill="#c2e6ff"/>
<rect x="113.5" y="871.64" width="2524.1" height="11.56" fill="#c2e6ff"/>
<rect x="113.5" y="894.76" width="2524.1" height="11.56" fill="#c2e6ff"/>
<rect x="113.5" y="929.44" width="2524.1" height="11.56" fill="#c2e6ff"/>
<rect x="113.5" y="952.56" width="2524.1" height="11.56" fill="#c2e6ff"/>
<rect x="113.5" y="987.24" width="2524.1" height="11.56" fill="#c2e6ff"/>
<rect x="113.5" y="1010.36" width="2524.1" height="11.56" fill="#c2e6ff"/>
<rect x="113.5" y="1033.48" width="2524.1" height="11.56" fill="#c2e6ff"/>
<rect x="113.5" y="1068.16" width="2524.1" height="11.56" fill="#c2e6ff"/>
<rect x="113.5" y="1091.28" width="2524.1" height="11.56" fill="#c2e6ff"/>
<rect x="113.5" y="1125.96" width="2524.1" height="11.56" fill="#c2e6ff"/>
<rect x="113.5" y="1149.08" width="2524.1" height="11.56" fill="#c2e6ff"/>
<rect x="113.5" y="1172.20" width="2524.1" height="11.56" fill="#c2e6ff"/>
<rect x="113.5" y="1206.88" width="2524.1" height="11.56" fill="#c2e6ff"/>
<rect x="113.5" y="1230.00" width="2524.1" height="11.56" fill="#c2e6ff"/>
<rect x="113.5" y="1264.68" width="2524.1" height="11.56" fill="#c2e6ff"/>
<rect x="113.5" y="1287.80" width="2524.1" height="11.56" fill="#c2e6ff"/>
<rect x="113.5" y="1310.92" width="2524.1" height="11.56" fill="#c2e6ff"/>
<rect x="113.5" y="1345.60" width="2524.1" height="11.56" fill="#c2e6ff"/>
<rect x="113.5" y="1368.72" width="2524.1" height="11.56" fill="#c2e6ff"/>
<rect x="113.5" y="1403.40" width="2524.1" height="11.56" fill="#c2e6ff"/>
<rect x="113.5" y="1426.52" width="2524.1" height="11.56" fill="#c2e6ff"/>
<rect x="113.5" y="1449.64" width="2524.1" height="11.56" fill="#c2e6ff"/>
<rect x="113.5" y="1484.32" width="2524.1" height="11.56" fill="#c2e6ff"/>
<rect x="113.5" y="1507.44" width="2524.1" height="11.56" fill="#c2e6ff"/>
<rect x="113.5" y="1542.12" width="2524.1" height="11.56" fill="#c2e6ff"/>
<rect x="113.5" y="1565.24" width="2524.1" height="11.56" fill="#c2e6ff"/>
<rect x="113.5" y="1588.36" width="2524.1" height="11.56" fill="#c2e6ff"/>
<rect x="113.5" y="1623.04" width="2524.1" height="11.56" fill="#c2e6ff"/>
<rect x="113.5" y="1646.16" width="2524.1" height="11.56" fill="#c2e6ff"/>
</g>
<g shape-rendering="crispEdges">
<rect x="113.5" y="1669.28" width="2524.1" height="127.16" fill="#eaf6ff"/>
</g>
<g stroke="#cdcfd2" stroke-width="1.8" stroke-dasharray="3.3,2.7" stroke-dashoffset="1.4">
<line x1="151.47" y1="190.5" x2="151.47" y2="1796.4"/>
<line x1="190.04" y1="190.5" x2="190.04" y2="1796.4"/>
<line x1="228.60" y1="190.5" x2="228.60" y2="1796.4"/>
<line x1="305.74" y1="190.5" x2="305.74" y2="1796.4"/>
<line x1="344.31" y1="190.5" x2="344.31" y2="1796.4"/>
<line x1="382.88" y1="190.5" x2="382.88" y2="1796.4"/>
<line x1="460.01" y1="190.5" x2="460.01" y2="1796.4"/>
<line x1="498.58" y1="190.5" x2="498.58" y2="1796.4"/>
<line x1="537.15" y1="190.5" x2="537.15" y2="1796.4"/>
<line x1="614.28" y1="190.5" x2="614.28" y2="1796.4"/>
<line x1="652.85" y1="190.5" x2="652.85" y2="1796.4"/>
<line x1="691.42" y1="190.5" x2="691.42" y2="1796.4"/>
<line x1="768.56" y1="190.5" x2="768.56" y2="1796.4"/>
<line x1="807.12" y1="190.5" x2="807.12" y2="1796.4"/>
<line x1="845.69" y1="190.5" x2="845.69" y2="1796.4"/>
<line x1="922.83" y1="190.5" x2="922.83" y2="1796.4"/>
<line x1="961.40" y1="190.5" x2="961.40" y2="1796.4"/>
<line x1="999.96" y1="190.5" x2="999.96" y2="1796.4"/>
<line x1="1077.10" y1="190.5" x2="1077.10" y2="1796.4"/>
<line x1="1115.67" y1="190.5" x2="1115.67" y2="1796.4"/>
<line x1="1154.24" y1="190.5" x2="1154.24" y2="1796.4"/>
<line x1="1231.37" y1="190.5" x2="1231.37" y2="1796.4"/>
<line x1="1269.94" y1="190.5" x2="1269.94" y2="1796.4"/>
<line x1="1308.51" y1="190.5" x2="1308.51" y2="1796.4"/>
<line x1="1385.64" y1="190.5" x2="1385.64" y2="1796.4"/>
<line x1="1424.21" y1="190.5" x2="1424.21" y2="1796.4"/>
<line x1="1462.78" y1="190.5" x2="1462.78" y2="1796.4"/>
<line x1="1539.92" y1="190.5" x2="1539.92" y2="1796.4"/>
<line x1="1578.48" y1="190.5" x2="1578.48" y2="1796.4"/>
<line x1="1617.05" y1="190.5" x2="1617.05" y2="1796.4"/>
<line x1="1694.19" y1="190.5" x2="1694.19" y2="1796.4"/>
<line x1="1732.76" y1="190.5" x2="1732.76" y2="1796.4"/>
<line x1="1771.32" y1="190.5" x2="1771.32" y2="1796.4"/>
<line x1="1848.46" y1="190.5" x2="1848.46" y2="1796.4"/>
<line x1="1887.03" y1="190.5" x2="1887.03" y2="1796.4"/>
<line x1="1925.60" y1="190.5" x2="1925.60" y2="1796.4"/>
<line x1="2002.73" y1="190.5" x2="2002.73" y2="1796.4"/>
<line x1="2041.30" y1="190.5" x2="2041.30" y2="1796.4"/>
<line x1="2079.87" y1="190.5" x2="2079.87" y2="1796.4"/>
<line x1="2157.00" y1="190.5" x2="2157.00" y2="1796.4"/>
<line x1="2195.57" y1="190.5" x2="2195.57" y2="1796.4"/>
<line x1="2234.14" y1="190.5" x2="2234.14" y2="1796.4"/>
<line x1="2311.28" y1="190.5" x2="2311.28" y2="1796.4"/>
<line x1="2349.84" y1="190.5" x2="2349.84" y2="1796.4"/>
<line x1="2388.41" y1="190.5" x2="2388.41" y2="1796.4"/>
<line x1="2465.55" y1="190.5" x2="2465.55" y2="1796.4"/>
<line x1="2504.12" y1="190.5" x2="2504.12" y2="1796.4"/>
<line x1="2542.68" y1="190.5" x2="2542.68" y2="1796.4"/>
<line x1="2619.82" y1="190.5" x2="2619.82" y2="1796.4"/>
</g>
<g shape-rendering="crispEdges">
<rect x="113.5" y="1669.28" width="2524.1" height="11.56" fill="#c2c2c2"/>
<rect x="113.5" y="1692.40" width="2524.1" height="11.56" fill="#c2c2c2"/>
<rect x="113.5" y="1715.52" width="2524.1" height="11.56" fill="#c2c2c2"/>
<rect x="113.5" y="1738.64" width="2524.1" height="11.56" fill="#c2c2c2"/>
<rect x="113.5" y="1761.76" width="2524.1" height="11.56" fill="#c2c2c2"/>
<rect x="113.5" y="1784.88" width="2524.1" height="11.56" fill="#c2c2c2"/>
<rect x="113.5" y="1795.24" width="2524.1" height="1.8" fill="#ababab"/>
</g>
<g shape-rendering="crispEdges">
<rect x="266.47" y="190.5" width="1.7" height="1605.9" fill="#b4babf"/>
<rect x="420.74" y="190.5" width="1.7" height="1605.9" fill="#b4babf"/>
<rect x="575.02" y="190.5" width="1.7" height="1605.9" fill="#b4babf"/>
<rect x="729.29" y="190.5" width="1.7" height="1605.9" fill="#b4babf"/>
<rect x="883.56" y="190.5" width="1.7" height="1605.9" fill="#b4babf"/>
<rect x="1037.83" y="190.5" width="1.7" height="1605.9" fill="#b4babf"/>
<rect x="1192.10" y="190.5" width="1.7" height="1605.9" fill="#b4babf"/>
<rect x="1346.38" y="190.5" width="1.7" height="1605.9" fill="#b4babf"/>
<rect x="1500.65" y="190.5" width="1.7" height="1605.9" fill="#b4babf"/>
<rect x="1654.92" y="190.5" width="1.7" height="1605.9" fill="#b4babf"/>
<rect x="1809.19" y="190.5" width="1.7" height="1605.9" fill="#b4babf"/>
<rect x="1963.46" y="190.5" width="1.7" height="1605.9" fill="#b4babf"/>
<rect x="2117.74" y="190.5" width="1.7" height="1605.9" fill="#b4babf"/>
<rect x="2272.01" y="190.5" width="1.7" height="1605.9" fill="#b4babf"/>
<rect x="2426.28" y="190.5" width="1.7" height="1605.9" fill="#b4babf"/>
<rect x="2580.55" y="190.5" width="1.7" height="1605.9" fill="#b4babf"/>
<rect x="113.0" y="190.5" width="1.3" height="1605.9" fill="#a9a9a9"/>
<rect x="113.5" y="189" width="2525.1" height="2" fill="#a9a9a9"/>
</g>
<g fill="#32c914" stroke="rgba(70,70,70,0.32)" stroke-width="1"><rect x="113.85" y="1195.62" width="56.50" height="10.40" rx="1.4"/><rect x="189.79" y="1195.62" width="57.70" height="10.40" rx="1.4"/><rect x="266.92" y="1195.62" width="57.70" height="10.40" rx="1.4"/><rect x="344.06" y="1195.62" width="57.70" height="10.40" rx="1.4"/><rect x="421.19" y="1218.74" width="57.70" height="10.40" rx="1.4"/><rect x="498.33" y="1218.74" width="57.70" height="10.40" rx="1.4"/><rect x="575.47" y="1218.74" width="57.70" height="10.40" rx="1.4"/><rect x="652.60" y="1218.74" width="57.70" height="10.40" rx="1.4"/><rect x="729.74" y="1241.86" width="57.70" height="10.40" rx="1.4"/><rect x="806.87" y="1241.86" width="57.70" height="10.40" rx="1.4"/><rect x="884.01" y="1241.86" width="57.70" height="10.40" rx="1.4"/><rect x="961.15" y="1241.86" width="57.70" height="10.40" rx="1.4"/><rect x="1038.28" y="1253.42" width="57.70" height="10.40" rx="1.4"/><rect x="1115.42" y="1253.42" width="57.70" height="10.40" rx="1.4"/><rect x="1192.55" y="1253.42" width="57.70" height="10.40" rx="1.4"/><rect x="1269.69" y="1253.42" width="57.70" height="10.40" rx="1.4"/><rect x="1346.83" y="1195.62" width="57.70" height="10.40" rx="1.4"/><rect x="1423.96" y="1195.62" width="57.70" height="10.40" rx="1.4"/><rect x="1501.10" y="1195.62" width="57.70" height="10.40" rx="1.4"/><rect x="1578.23" y="1195.62" width="57.70" height="10.40" rx="1.4"/><rect x="1655.37" y="1218.74" width="57.70" height="10.40" rx="1.4"/><rect x="1732.51" y="1218.74" width="57.70" height="10.40" rx="1.4"/><rect x="1809.64" y="1218.74" width="57.70" height="10.40" rx="1.4"/><rect x="1886.78" y="1218.74" width="57.70" height="10.40" rx="1.4"/><rect x="1963.91" y="1241.86" width="57.70" height="10.40" rx="1.4"/><rect x="2041.05" y="1241.86" width="57.70" height="10.40" rx="1.4"/><rect x="2118.19" y="1241.86" width="57.70" height="10.40" rx="1.4"/><rect x="2195.32" y="1241.86" width="57.70" height="10.40" rx="1.4"/><rect x="2272.46" y="1253.42" width="57.70" height="10.40" rx="1.4"/><rect x="2349.59" y="1253.42" width="57.70" height="10.40" rx="1.4"/><rect x="2426.73" y="1195.62" width="57.70" height="10.40" rx="1.4"/><rect x="2503.87" y="1195.62" width="115.55" height="10.40" rx="1.4"/></g>
<g fill="#505050" stroke="rgba(70,70,70,0.32)" stroke-width="1"><rect x="113.85" y="1172.50" width="8.29" height="10.40" rx="1.4"/><rect x="131.93" y="1172.50" width="9.49" height="10.40" rx="1.4"/><rect x="151.22" y="1172.50" width="9.49" height="10.40" rx="1.4"/><rect x="170.50" y="1172.50" width="9.49" height="10.40" rx="1.4"/><rect x="189.79" y="1172.50" width="9.49" height="10.40" rx="1.4"/><rect x="209.07" y="1172.50" width="9.49" height="10.40" rx="1.4"/><rect x="228.35" y="1172.50" width="9.49" height="10.40" rx="1.4"/><rect x="247.64" y="1172.50" width="9.49" height="10.40" rx="1.4"/><rect x="266.92" y="1172.50" width="9.49" height="10.40" rx="1.4"/><rect x="286.21" y="1172.50" width="9.49" height="10.40" rx="1.4"/><rect x="305.49" y="1172.50" width="9.49" height="10.40" rx="1.4"/><rect x="324.77" y="1172.50" width="9.49" height="10.40" rx="1.4"/><rect x="344.06" y="1172.50" width="9.49" height="10.40" rx="1.4"/><rect x="363.34" y="1172.50" width="9.49" height="10.40" rx="1.4"/><rect x="382.63" y="1172.50" width="9.49" height="10.40" rx="1.4"/><rect x="401.91" y="1172.50" width="9.49" height="10.40" rx="1.4"/><rect x="421.19" y="1172.50" width="9.49" height="10.40" rx="1.4"/><rect x="440.48" y="1172.50" width="9.49" height="10.40" rx="1.4"/><rect x="459.76" y="1172.50" width="9.49" height="10.40" rx="1.4"/><rect x="479.05" y="1172.50" width="9.49" height="10.40" rx="1.4"/><rect x="498.33" y="1172.50" width="9.49" height="10.40" rx="1.4"/><rect x="517.61" y="1172.50" width="9.49" height="10.40" rx="1.4"/><rect x="536.90" y="1172.50" width="9.49" height="10.40" rx="1.4"/><rect x="556.18" y="1172.50" width="9.49" height="10.40" rx="1.4"/><rect x="575.47" y="1172.50" width="9.49" height="10.40" rx="1.4"/><rect x="594.75" y="1172.50" width="9.49" height="10.40" rx="1.4"/><rect x="614.03" y="1172.50" width="9.49" height="10.40" rx="1.4"/><rect x="633.32" y="1172.50" width="9.49" height="10.40" rx="1.4"/><rect x="652.60" y="1172.50" width="9.49" height="10.40" rx="1.4"/><rect x="671.89" y="1172.50" width="9.49" height="10.40" rx="1.4"/><rect x="691.17" y="1172.50" width="9.49" height="10.40" rx="1.4"/><rect x="710.45" y="1172.50" width="9.49" height="10.40" rx="1.4"/><rect x="729.74" y="1172.50" width="9.49" height="10.40" rx="1.4"/><rect x="749.02" y="1172.50" width="9.49" height="10.40" rx="1.4"/><rect x="768.31" y="1172.50" width="9.49" height="10.40" rx="1.4"/><rect x="787.59" y="1172.50" width="9.49" height="10.40" rx="1.4"/><rect x="806.87" y="1172.50" width="9.49" height="10.40" rx="1.4"/><rect x="826.16" y="1172.50" width="9.49" height="10.40" rx="1.4"/><rect x="845.44" y="1172.50" width="9.49" height="10.40" rx="1.4"/><rect x="864.73" y="1172.50" width="9.49" height="10.40" rx="1.4"/><rect x="884.01" y="1172.50" width="9.49" height="10.40" rx="1.4"/><rect x="903.29" y="1172.50" width="9.49" height="10.40" rx="1.4"/><rect x="922.58" y="1172.50" width="9.49" height="10.40" rx="1.4"/><rect x="941.86" y="1172.50" width="9.49" height="10.40" rx="1.4"/><rect x="961.15" y="1172.50" width="9.49" height="10.40" rx="1.4"/><rect x="980.43" y="1172.50" width="9.49" height="10.40" rx="1.4"/><rect x="999.71" y="1172.50" width="9.49" height="10.40" rx="1.4"/><rect x="1019.00" y="1172.50" width="9.49" height="10.40" rx="1.4"/><rect x="1038.28" y="1172.50" width="9.49" height="10.40" rx="1.4"/><rect x="1057.57" y="1172.50" width="9.49" height="10.40" rx="1.4"/><rect x="1076.85" y="1172.50" width="9.49" height="10.40" rx="1.4"/><rect x="1096.13" y="1172.50" width="9.49" height="10.40" rx="1.4"/><rect x="1115.42" y="1172.50" width="9.49" height="10.40" rx="1.4"/><rect x="1134.70" y="1172.50" width="9.49" height="10.40" rx="1.4"/><rect x="1153.99" y="1172.50" width="9.49" height="10.40" rx="1.4"/><rect x="1173.27" y="1172.50" width="9.49" height="10.40" rx="1.4"/><rect x="1192.55" y="1172.50" width="9.49" height="10.40" rx="1.4"/><rect x="1211.84" y="1172.50" width="9.49" height="10.40" rx="1.4"/><rect x="1231.12" y="1172.50" width="9.49" height="10.40" rx="1.4"/><rect x="1250.41" y="1172.50" width="9.49" height="10.40" rx="1.4"/><rect x="1269.69" y="1172.50" width="9.49" height="10.40" rx="1.4"/><rect x="1288.97" y="1172.50" width="9.49" height="10.40" rx="1.4"/><rect x="1308.26" y="1172.50" width="9.49" height="10.40" rx="1.4"/><rect x="1327.54" y="1172.50" width="9.49" height="10.40" rx="1.4"/><rect x="1346.83" y="1172.50" width="9.49" height="10.40" rx="1.4"/><rect x="1366.11" y="1172.50" width="9.49" height="10.40" rx="1.4"/><rect x="1385.39" y="1172.50" width="9.49" height="10.40" rx="1.4"/><rect x="1404.68" y="1172.50" width="9.49" height="10.40" rx="1.4"/><rect x="1423.96" y="1172.50" width="9.49" height="10.40" rx="1.4"/><rect x="1443.25" y="1172.50" width="9.49" height="10.40" rx="1.4"/><rect x="1462.53" y="1172.50" width="9.49" height="10.40" rx="1.4"/><rect x="1481.81" y="1172.50" width="9.49" height="10.40" rx="1.4"/><rect x="1501.10" y="1172.50" width="9.49" height="10.40" rx="1.4"/><rect x="1520.38" y="1172.50" width="9.49" height="10.40" rx="1.4"/><rect x="1539.67" y="1172.50" width="9.49" height="10.40" rx="1.4"/><rect x="1558.95" y="1172.50" width="9.49" height="10.40" rx="1.4"/><rect x="1578.23" y="1172.50" width="9.49" height="10.40" rx="1.4"/><rect x="1597.52" y="1172.50" width="9.49" height="10.40" rx="1.4"/><rect x="1616.80" y="1172.50" width="9.49" height="10.40" rx="1.4"/><rect x="1636.09" y="1172.50" width="9.49" height="10.40" rx="1.4"/><rect x="1655.37" y="1172.50" width="9.49" height="10.40" rx="1.4"/><rect x="1674.65" y="1172.50" width="9.49" height="10.40" rx="1.4"/><rect x="1693.94" y="1172.50" width="9.49" height="10.40" rx="1.4"/><rect x="1713.22" y="1172.50" width="9.49" height="10.40" rx="1.4"/><rect x="1732.51" y="1172.50" width="9.49" height="10.40" rx="1.4"/><rect x="1751.79" y="1172.50" width="9.49" height="10.40" rx="1.4"/><rect x="1771.07" y="1172.50" width="9.49" height="10.40" rx="1.4"/><rect x="1790.36" y="1172.50" width="9.49" height="10.40" rx="1.4"/><rect x="1809.64" y="1172.50" width="9.49" height="10.40" rx="1.4"/><rect x="1828.93" y="1172.50" width="9.49" height="10.40" rx="1.4"/><rect x="1848.21" y="1172.50" width="9.49" height="10.40" rx="1.4"/><rect x="1867.49" y="1172.50" width="9.49" height="10.40" rx="1.4"/><rect x="1886.78" y="1172.50" width="9.49" height="10.40" rx="1.4"/><rect x="1906.06" y="1172.50" width="9.49" height="10.40" rx="1.4"/><rect x="1925.35" y="1172.50" width="9.49" height="10.40" rx="1.4"/><rect x="1944.63" y="1172.50" width="9.49" height="10.40" rx="1.4"/><rect x="1963.91" y="1172.50" width="9.49" height="10.40" rx="1.4"/><rect x="1983.20" y="1172.50" width="9.49" height="10.40" rx="1.4"/><rect x="2002.48" y="1172.50" width="9.49" height="10.40" rx="1.4"/><rect x="2021.77" y="1172.50" width="9.49" height="10.40" rx="1.4"/><rect x="2041.05" y="1172.50" width="9.49" height="10.40" rx="1.4"/><rect x="2060.33" y="1172.50" width="9.49" height="10.40" rx="1.4"/><rect x="2079.62" y="1172.50" width="9.49" height="10.40" rx="1.4"/><rect x="2098.90" y="1172.50" width="9.49" height="10.40" rx="1.4"/><rect x="2118.19" y="1172.50" width="9.49" height="10.40" rx="1.4"/><rect x="2137.47" y="1172.50" width="9.49" height="10.40" rx="1.4"/><rect x="2156.75" y="1172.50" width="9.49" height="10.40" rx="1.4"/><rect x="2176.04" y="1172.50" width="9.49" height="10.40" rx="1.4"/><rect x="2195.32" y="1172.50" width="9.49" height="10.40" rx="1.4"/><rect x="2214.61" y="1172.50" width="9.49" height="10.40" rx="1.4"/><rect x="2233.89" y="1172.50" width="9.49" height="10.40" rx="1.4"/><rect x="2253.17" y="1172.50" width="9.49" height="10.40" rx="1.4"/><rect x="2272.46" y="1172.50" width="9.49" height="10.40" rx="1.4"/><rect x="2291.74" y="1172.50" width="9.49" height="10.40" rx="1.4"/><rect x="2311.03" y="1172.50" width="9.49" height="10.40" rx="1.4"/><rect x="2330.31" y="1172.50" width="9.49" height="10.40" rx="1.4"/><rect x="2349.59" y="1172.50" width="9.49" height="10.40" rx="1.4"/><rect x="2368.88" y="1172.50" width="9.49" height="10.40" rx="1.4"/><rect x="2388.16" y="1172.50" width="9.49" height="10.40" rx="1.4"/><rect x="2407.45" y="1172.50" width="9.49" height="10.40" rx="1.4"/><rect x="2426.73" y="1172.50" width="9.49" height="10.40" rx="1.4"/><rect x="2446.01" y="1172.50" width="9.49" height="10.40" rx="1.4"/><rect x="2465.30" y="1172.50" width="9.49" height="10.40" rx="1.4"/><rect x="2484.58" y="1172.50" width="9.49" height="10.40" rx="1.4"/><rect x="2503.87" y="1172.50" width="9.49" height="10.40" rx="1.4"/><rect x="2523.15" y="1172.50" width="9.49" height="10.40" rx="1.4"/><rect x="2542.43" y="1172.50" width="9.49" height="10.40" rx="1.4"/><rect x="2561.72" y="1172.50" width="9.49" height="10.40" rx="1.4"/><rect x="2581.00" y="1172.50" width="9.49" height="10.40" rx="1.4"/><rect x="2600.29" y="1172.50" width="9.49" height="10.40" rx="1.4"/><rect x="2619.57" y="1172.50" width="9.49" height="10.40" rx="1.4"/><rect x="113.85" y="1241.86" width="8.29" height="10.40" rx="1.4"/><rect x="189.79" y="1241.86" width="9.49" height="10.40" rx="1.4"/><rect x="266.92" y="1241.86" width="9.49" height="10.40" rx="1.4"/><rect x="344.06" y="1241.86" width="9.49" height="10.40" rx="1.4"/><rect x="421.19" y="1241.86" width="9.49" height="10.40" rx="1.4"/><rect x="498.33" y="1241.86" width="9.49" height="10.40" rx="1.4"/><rect x="575.47" y="1241.86" width="9.49" height="10.40" rx="1.4"/><rect x="652.60" y="1241.86" width="9.49" height="10.40" rx="1.4"/><rect x="729.74" y="1241.86" width="9.49" height="10.40" rx="1.4"/><rect x="806.87" y="1241.86" width="9.49" height="10.40" rx="1.4"/><rect x="884.01" y="1241.86" width="9.49" height="10.40" rx="1.4"/><rect x="961.15" y="1241.86" width="9.49" height="10.40" rx="1.4"/><rect x="1038.28" y="1241.86" width="9.49" height="10.40" rx="1.4"/><rect x="1115.42" y="1241.86" width="9.49" height="10.40" rx="1.4"/><rect x="1192.55" y="1241.86" width="9.49" height="10.40" rx="1.4"/><rect x="1269.69" y="1241.86" width="9.49" height="10.40" rx="1.4"/><rect x="1346.83" y="1241.86" width="9.49" height="10.40" rx="1.4"/><rect x="1423.96" y="1241.86" width="9.49" height="10.40" rx="1.4"/><rect x="1501.10" y="1241.86" width="9.49" height="10.40" rx="1.4"/><rect x="1578.23" y="1241.86" width="9.49" height="10.40" rx="1.4"/><rect x="1655.37" y="1241.86" width="9.49" height="10.40" rx="1.4"/><rect x="1732.51" y="1241.86" width="9.49" height="10.40" rx="1.4"/><rect x="1809.64" y="1241.86" width="9.49" height="10.40" rx="1.4"/><rect x="1886.78" y="1241.86" width="9.49" height="10.40" rx="1.4"/><rect x="1963.91" y="1241.86" width="9.49" height="10.40" rx="1.4"/><rect x="2041.05" y="1241.86" width="9.49" height="10.40" rx="1.4"/><rect x="2118.19" y="1241.86" width="9.49" height="10.40" rx="1.4"/><rect x="2195.32" y="1241.86" width="9.49" height="10.40" rx="1.4"/><rect x="2272.46" y="1241.86" width="9.49" height="10.40" rx="1.4"/><rect x="2349.59" y="1241.86" width="9.49" height="10.40" rx="1.4"/><rect x="2426.73" y="1241.86" width="9.49" height="10.40" rx="1.4"/><rect x="2503.87" y="1241.86" width="9.49" height="10.40" rx="1.4"/><rect x="2581.00" y="1241.86" width="9.49" height="10.40" rx="1.4"/></g>
<g fill="#cdf100" stroke="rgba(70,70,70,0.32)" stroke-width="1"><rect x="113.85" y="918.18" width="17.93" height="10.40" rx="1.4"/><rect x="131.93" y="883.50" width="19.13" height="10.40" rx="1.4"/><rect x="151.22" y="837.26" width="19.13" height="10.40" rx="1.4"/><rect x="170.50" y="779.46" width="19.13" height="10.40" rx="1.4"/><rect x="189.79" y="837.26" width="19.13" height="10.40" rx="1.4"/><rect x="209.07" y="883.50" width="19.13" height="10.40" rx="1.4"/><rect x="228.35" y="837.26" width="19.13" height="10.40" rx="1.4"/><rect x="247.64" y="883.50" width="19.13" height="10.40" rx="1.4"/><rect x="266.92" y="918.18" width="19.13" height="10.40" rx="1.4"/><rect x="286.21" y="883.50" width="19.13" height="10.40" rx="1.4"/><rect x="305.49" y="837.26" width="19.13" height="10.40" rx="1.4"/><rect x="324.77" y="779.46" width="19.13" height="10.40" rx="1.4"/><rect x="344.06" y="837.26" width="19.13" height="10.40" rx="1.4"/><rect x="363.34" y="883.50" width="19.13" height="10.40" rx="1.4"/><rect x="382.63" y="837.26" width="19.13" height="10.40" rx="1.4"/><rect x="401.91" y="883.50" width="19.13" height="10.40" rx="1.4"/><rect x="421.19" y="941.30" width="19.13" height="10.40" rx="1.4"/><rect x="440.48" y="895.06" width="19.13" height="10.40" rx="1.4"/><rect x="459.76" y="860.38" width="19.13" height="10.40" rx="1.4"/><rect x="479.05" y="802.58" width="19.13" height="10.40" rx="1.4"/><rect x="498.33" y="860.38" width="19.13" height="10.40" rx="1.4"/><rect x="517.61" y="895.06" width="19.13" height="10.40" rx="1.4"/><rect x="536.90" y="860.38" width="19.13" height="10.40" rx="1.4"/><rect x="556.18" y="895.06" width="19.13" height="10.40" rx="1.4"/><rect x="575.47" y="941.30" width="19.13" height="10.40" rx="1.4"/><rect x="594.75" y="895.06" width="19.13" height="10.40" rx="1.4"/><rect x="614.03" y="860.38" width="19.13" height="10.40" rx="1.4"/><rect x="633.32" y="802.58" width="19.13" height="10.40" rx="1.4"/><rect x="652.60" y="860.38" width="19.13" height="10.40" rx="1.4"/><rect x="671.89" y="895.06" width="19.13" height="10.40" rx="1.4"/><rect x="691.17" y="860.38" width="19.13" height="10.40" rx="1.4"/><rect x="710.45" y="895.06" width="19.13" height="10.40" rx="1.4"/><rect x="729.74" y="964.42" width="19.13" height="10.40" rx="1.4"/><rect x="749.02" y="918.18" width="19.13" height="10.40" rx="1.4"/><rect x="768.31" y="883.50" width="19.13" height="10.40" rx="1.4"/><rect x="787.59" y="825.70" width="19.13" height="10.40" rx="1.4"/><rect x="806.87" y="883.50" width="19.13" height="10.40" rx="1.4"/><rect x="826.16" y="918.18" width="19.13" height="10.40" rx="1.4"/><rect x="845.44" y="883.50" width="19.13" height="10.40" rx="1.4"/><rect x="864.73" y="918.18" width="19.13" height="10.40" rx="1.4"/><rect x="884.01" y="964.42" width="19.13" height="10.40" rx="1.4"/><rect x="903.29" y="918.18" width="19.13" height="10.40" rx="1.4"/><rect x="922.58" y="883.50" width="19.13" height="10.40" rx="1.4"/><rect x="941.86" y="825.70" width="19.13" height="10.40" rx="1.4"/><rect x="961.15" y="883.50" width="19.13" height="10.40" rx="1.4"/><rect x="980.43" y="918.18" width="19.13" height="10.40" rx="1.4"/><rect x="999.71" y="883.50" width="19.13" height="10.40" rx="1.4"/><rect x="1019.00" y="918.18" width="19.13" height="10.40" rx="1.4"/><rect x="1038.28" y="975.98" width="19.13" height="10.40" rx="1.4"/><rect x="1057.57" y="929.74" width="19.13" height="10.40" rx="1.4"/><rect x="1076.85" y="895.06" width="19.13" height="10.40" rx="1.4"/><rect x="1096.13" y="860.38" width="19.13" height="10.40" rx="1.4"/><rect x="1115.42" y="895.06" width="19.13" height="10.40" rx="1.4"/><rect x="1134.70" y="929.74" width="19.13" height="10.40" rx="1.4"/><rect x="1153.99" y="860.38" width="19.13" height="10.40" rx="1.4"/><rect x="1173.27" y="895.06" width="19.13" height="10.40" rx="1.4"/><rect x="1192.55" y="975.98" width="19.13" height="10.40" rx="1.4"/><rect x="1211.84" y="929.74" width="19.13" height="10.40" rx="1.4"/><rect x="1231.12" y="895.06" width="19.13" height="10.40" rx="1.4"/><rect x="1250.41" y="860.38" width="19.13" height="10.40" rx="1.4"/><rect x="1269.69" y="895.06" width="19.13" height="10.40" rx="1.4"/><rect x="1288.97" y="929.74" width="19.13" height="10.40" rx="1.4"/><rect x="1308.26" y="860.38" width="19.13" height="10.40" rx="1.4"/><rect x="1327.54" y="895.06" width="19.13" height="10.40" rx="1.4"/><rect x="1346.83" y="918.18" width="19.13" height="10.40" rx="1.4"/><rect x="1366.11" y="883.50" width="19.13" height="10.40" rx="1.4"/><rect x="1385.39" y="837.26" width="19.13" height="10.40" rx="1.4"/><rect x="1404.68" y="779.46" width="19.13" height="10.40" rx="1.4"/><rect x="1423.96" y="837.26" width="19.13" height="10.40" rx="1.4"/><rect x="1443.25" y="883.50" width="19.13" height="10.40" rx="1.4"/><rect x="1462.53" y="837.26" width="19.13" height="10.40" rx="1.4"/><rect x="1481.81" y="883.50" width="19.13" height="10.40" rx="1.4"/><rect x="1501.10" y="918.18" width="19.13" height="10.40" rx="1.4"/><rect x="1520.38" y="883.50" width="19.13" height="10.40" rx="1.4"/><rect x="1539.67" y="837.26" width="19.13" height="10.40" rx="1.4"/><rect x="1558.95" y="779.46" width="19.13" height="10.40" rx="1.4"/><rect x="1578.23" y="837.26" width="19.13" height="10.40" rx="1.4"/><rect x="1597.52" y="883.50" width="19.13" height="10.40" rx="1.4"/><rect x="1616.80" y="837.26" width="19.13" height="10.40" rx="1.4"/><rect x="1636.09" y="883.50" width="19.13" height="10.40" rx="1.4"/><rect x="1655.37" y="941.30" width="19.13" height="10.40" rx="1.4"/><rect x="1674.65" y="895.06" width="19.13" height="10.40" rx="1.4"/><rect x="1693.94" y="860.38" width="19.13" height="10.40" rx="1.4"/><rect x="1713.22" y="802.58" width="19.13" height="10.40" rx="1.4"/><rect x="1732.51" y="860.38" width="19.13" height="10.40" rx="1.4"/><rect x="1751.79" y="895.06" width="19.13" height="10.40" rx="1.4"/><rect x="1771.07" y="860.38" width="19.13" height="10.40" rx="1.4"/><rect x="1790.36" y="895.06" width="19.13" height="10.40" rx="1.4"/><rect x="1809.64" y="941.30" width="19.13" height="10.40" rx="1.4"/><rect x="1828.93" y="895.06" width="19.13" height="10.40" rx="1.4"/><rect x="1848.21" y="860.38" width="19.13" height="10.40" rx="1.4"/><rect x="1867.49" y="802.58" width="19.13" height="10.40" rx="1.4"/><rect x="1886.78" y="860.38" width="19.13" height="10.40" rx="1.4"/><rect x="1906.06" y="895.06" width="19.13" height="10.40" rx="1.4"/><rect x="1925.35" y="860.38" width="19.13" height="10.40" rx="1.4"/><rect x="1944.63" y="895.06" width="19.13" height="10.40" rx="1.4"/><rect x="1963.91" y="918.18" width="19.13" height="10.40" rx="1.4"/><rect x="1983.20" y="883.50" width="19.13" height="10.40" rx="1.4"/><rect x="2002.48" y="837.26" width="19.13" height="10.40" rx="1.4"/><rect x="2021.77" y="779.46" width="19.13" height="10.40" rx="1.4"/><rect x="2041.05" y="837.26" width="19.13" height="10.40" rx="1.4"/><rect x="2060.33" y="883.50" width="19.13" height="10.40" rx="1.4"/><rect x="2079.62" y="837.26" width="19.13" height="10.40" rx="1.4"/><rect x="2098.90" y="883.50" width="19.13" height="10.40" rx="1.4"/><rect x="2118.19" y="918.18" width="19.13" height="10.40" rx="1.4"/><rect x="2137.47" y="883.50" width="19.13" height="10.40" rx="1.4"/><rect x="2156.75" y="837.26" width="19.13" height="10.40" rx="1.4"/><rect x="2176.04" y="779.46" width="19.13" height="10.40" rx="1.4"/><rect x="2195.32" y="837.26" width="19.13" height="10.40" rx="1.4"/><rect x="2214.61" y="883.50" width="19.13" height="10.40" rx="1.4"/><rect x="2233.89" y="837.26" width="19.13" height="10.40" rx="1.4"/><rect x="2253.17" y="883.50" width="19.13" height="10.40" rx="1.4"/><rect x="2272.46" y="964.42" width="19.13" height="10.40" rx="1.4"/><rect x="2291.74" y="918.18" width="19.13" height="10.40" rx="1.4"/><rect x="2311.03" y="883.50" width="19.13" height="10.40" rx="1.4"/><rect x="2330.31" y="825.70" width="19.13" height="10.40" rx="1.4"/><rect x="2349.59" y="883.50" width="19.13" height="10.40" rx="1.4"/><rect x="2368.88" y="918.18" width="19.13" height="10.40" rx="1.4"/><rect x="2388.16" y="883.50" width="19.13" height="10.40" rx="1.4"/><rect x="2407.45" y="918.18" width="19.13" height="10.40" rx="1.4"/><rect x="2426.73" y="964.42" width="19.13" height="10.40" rx="1.4"/><rect x="2446.01" y="918.18" width="19.13" height="10.40" rx="1.4"/><rect x="2465.30" y="883.50" width="19.13" height="10.40" rx="1.4"/><rect x="2484.58" y="825.70" width="19.13" height="10.40" rx="1.4"/><rect x="2503.87" y="883.50" width="19.13" height="10.40" rx="1.4"/><rect x="2523.15" y="918.18" width="19.13" height="10.40" rx="1.4"/><rect x="2542.43" y="883.50" width="19.13" height="10.40" rx="1.4"/><rect x="2561.72" y="918.18" width="19.13" height="10.40" rx="1.4"/></g>
<g fill="#f14639" stroke="rgba(70,70,70,0.32)" stroke-width="1"><rect x="113.85" y="698.54" width="17.93" height="10.40" rx="1.4"/><rect x="131.93" y="663.86" width="19.13" height="10.40" rx="1.4"/><rect x="151.22" y="617.62" width="38.42" height="10.40" rx="1.4"/><rect x="189.79" y="640.74" width="19.13" height="10.40" rx="1.4"/><rect x="209.07" y="663.86" width="19.13" height="10.40" rx="1.4"/><rect x="228.35" y="698.54" width="38.42" height="10.40" rx="1.4"/><rect x="266.92" y="698.54" width="19.13" height="10.40" rx="1.4"/><rect x="286.21" y="663.86" width="19.13" height="10.40" rx="1.4"/><rect x="305.49" y="606.06" width="38.42" height="10.40" rx="1.4"/><rect x="344.06" y="617.62" width="19.13" height="10.40" rx="1.4"/><rect x="363.34" y="663.86" width="19.13" height="10.40" rx="1.4"/><rect x="382.63" y="698.54" width="38.42" height="10.40" rx="1.4"/><rect x="421.19" y="721.66" width="19.13" height="10.40" rx="1.4"/><rect x="440.48" y="663.86" width="19.13" height="10.40" rx="1.4"/><rect x="459.76" y="617.62" width="38.42" height="10.40" rx="1.4"/><rect x="498.33" y="640.74" width="19.13" height="10.40" rx="1.4"/><rect x="517.61" y="663.86" width="19.13" height="10.40" rx="1.4"/><rect x="536.90" y="721.66" width="38.42" height="10.40" rx="1.4"/><rect x="575.47" y="675.42" width="19.13" height="10.40" rx="1.4"/><rect x="594.75" y="640.74" width="19.13" height="10.40" rx="1.4"/><rect x="614.03" y="582.94" width="38.42" height="10.40" rx="1.4"/><rect x="652.60" y="606.06" width="19.13" height="10.40" rx="1.4"/><rect x="671.89" y="640.74" width="19.13" height="10.40" rx="1.4"/><rect x="691.17" y="675.42" width="38.42" height="10.40" rx="1.4"/><rect x="729.74" y="698.54" width="19.13" height="10.40" rx="1.4"/><rect x="749.02" y="663.86" width="19.13" height="10.40" rx="1.4"/><rect x="768.31" y="617.62" width="19.13" height="10.40" rx="1.4"/><rect x="787.59" y="582.94" width="19.13" height="10.40" rx="1.4"/><rect x="806.87" y="559.82" width="38.42" height="10.40" rx="1.4"/><rect x="845.44" y="582.94" width="19.13" height="10.40" rx="1.4"/><rect x="864.73" y="617.62" width="19.13" height="10.40" rx="1.4"/><rect x="884.01" y="606.06" width="19.13" height="10.40" rx="1.4"/><rect x="903.29" y="663.86" width="19.13" height="10.40" rx="1.4"/><rect x="922.58" y="698.54" width="19.13" height="10.40" rx="1.4"/><rect x="941.86" y="663.86" width="19.13" height="10.40" rx="1.4"/><rect x="961.15" y="640.74" width="38.42" height="10.40" rx="1.4"/><rect x="999.71" y="663.86" width="19.13" height="10.40" rx="1.4"/><rect x="1019.00" y="698.54" width="19.13" height="10.40" rx="1.4"/><rect x="1038.28" y="640.74" width="19.13" height="10.40" rx="1.4"/><rect x="1057.57" y="606.06" width="19.13" height="10.40" rx="1.4"/><rect x="1076.85" y="559.82" width="38.42" height="10.40" rx="1.4"/><rect x="1115.42" y="582.94" width="19.13" height="10.40" rx="1.4"/><rect x="1134.70" y="606.06" width="19.13" height="10.40" rx="1.4"/><rect x="1153.99" y="640.74" width="38.42" height="10.40" rx="1.4"/><rect x="1192.55" y="617.62" width="19.13" height="10.40" rx="1.4"/><rect x="1211.84" y="571.38" width="19.13" height="10.40" rx="1.4"/><rect x="1231.12" y="536.70" width="38.42" height="10.40" rx="1.4"/><rect x="1269.69" y="571.38" width="19.13" height="10.40" rx="1.4"/><rect x="1288.97" y="617.62" width="19.13" height="10.40" rx="1.4"/><rect x="1308.26" y="640.74" width="38.42" height="10.40" rx="1.4"/><rect x="1346.83" y="698.54" width="19.13" height="10.40" rx="1.4"/><rect x="1366.11" y="663.86" width="19.13" height="10.40" rx="1.4"/><rect x="1385.39" y="617.62" width="38.42" height="10.40" rx="1.4"/><rect x="1423.96" y="640.74" width="19.13" height="10.40" rx="1.4"/><rect x="1443.25" y="663.86" width="19.13" height="10.40" rx="1.4"/><rect x="1462.53" y="698.54" width="38.42" height="10.40" rx="1.4"/><rect x="1501.10" y="698.54" width="19.13" height="10.40" rx="1.4"/><rect x="1520.38" y="663.86" width="19.13" height="10.40" rx="1.4"/><rect x="1539.67" y="606.06" width="38.42" height="10.40" rx="1.4"/><rect x="1578.23" y="617.62" width="19.13" height="10.40" rx="1.4"/><rect x="1597.52" y="663.86" width="19.13" height="10.40" rx="1.4"/><rect x="1616.80" y="698.54" width="38.42" height="10.40" rx="1.4"/><rect x="1655.37" y="721.66" width="19.13" height="10.40" rx="1.4"/><rect x="1674.65" y="663.86" width="19.13" height="10.40" rx="1.4"/><rect x="1693.94" y="617.62" width="38.42" height="10.40" rx="1.4"/><rect x="1732.51" y="640.74" width="19.13" height="10.40" rx="1.4"/><rect x="1751.79" y="663.86" width="19.13" height="10.40" rx="1.4"/><rect x="1771.07" y="721.66" width="38.42" height="10.40" rx="1.4"/><rect x="1809.64" y="675.42" width="19.13" height="10.40" rx="1.4"/><rect x="1828.93" y="640.74" width="19.13" height="10.40" rx="1.4"/><rect x="1848.21" y="582.94" width="38.42" height="10.40" rx="1.4"/><rect x="1886.78" y="606.06" width="19.13" height="10.40" rx="1.4"/><rect x="1906.06" y="640.74" width="19.13" height="10.40" rx="1.4"/><rect x="1925.35" y="675.42" width="38.42" height="10.40" rx="1.4"/><rect x="1963.91" y="698.54" width="19.13" height="10.40" rx="1.4"/><rect x="1983.20" y="663.86" width="19.13" height="10.40" rx="1.4"/><rect x="2002.48" y="617.62" width="19.13" height="10.40" rx="1.4"/><rect x="2021.77" y="582.94" width="19.13" height="10.40" rx="1.4"/><rect x="2041.05" y="559.82" width="38.42" height="10.40" rx="1.4"/><rect x="2079.62" y="582.94" width="19.13" height="10.40" rx="1.4"/><rect x="2098.90" y="617.62" width="19.13" height="10.40" rx="1.4"/><rect x="2118.19" y="606.06" width="19.13" height="10.40" rx="1.4"/><rect x="2137.47" y="663.86" width="19.13" height="10.40" rx="1.4"/><rect x="2156.75" y="698.54" width="19.13" height="10.40" rx="1.4"/><rect x="2176.04" y="663.86" width="19.13" height="10.40" rx="1.4"/><rect x="2195.32" y="640.74" width="38.42" height="10.40" rx="1.4"/><rect x="2233.89" y="663.86" width="19.13" height="10.40" rx="1.4"/><rect x="2253.17" y="698.54" width="19.13" height="10.40" rx="1.4"/><rect x="2272.46" y="640.74" width="19.13" height="10.40" rx="1.4"/><rect x="2291.74" y="606.06" width="19.13" height="10.40" rx="1.4"/><rect x="2311.03" y="559.82" width="38.42" height="10.40" rx="1.4"/><rect x="2349.59" y="582.94" width="19.13" height="10.40" rx="1.4"/><rect x="2368.88" y="606.06" width="19.13" height="10.40" rx="1.4"/><rect x="2388.16" y="640.74" width="38.42" height="10.40" rx="1.4"/><rect x="2426.73" y="617.62" width="19.13" height="10.40" rx="1.4"/><rect x="2446.01" y="571.38" width="19.13" height="10.40" rx="1.4"/><rect x="2465.30" y="536.70" width="38.42" height="10.40" rx="1.4"/><rect x="2503.87" y="571.38" width="19.13" height="10.40" rx="1.4"/><rect x="2523.15" y="617.62" width="19.13" height="10.40" rx="1.4"/><rect x="2542.43" y="640.74" width="38.42" height="10.40" rx="1.4"/></g>
<rect x="113.80" y="1669.68" width="14" height="10.66" rx="1.2" fill="#3232ff"/>
<rect x="113.80" y="1681.24" width="14" height="10.66" rx="1.2" fill="#3232ff"/>
<rect x="113.80" y="1704.36" width="14" height="10.66" rx="1.2" fill="#32c914"/>
<rect x="113.80" y="1750.60" width="14" height="10.66" rx="1.2" fill="#3232ff"/>
<rect x="113.80" y="1762.16" width="14" height="10.66" rx="1.2" fill="#505050"/>
<rect x="1347.58" y="1762.16" width="14" height="10.66" rx="1.2" fill="#525252"/>
<g font-family="&quot;Liberation Sans&quot;, sans-serif" font-size="9.6" fill="#6e7382" text-anchor="end">
<text x="98" y="1679.78">Tempo Change</text>
<text x="98" y="1691.34">Time Signature</text>
<text x="98" y="1702.90">Key Signature</text>
<text x="98" y="1714.46">Program Change</text>
<text x="98" y="1726.02">Control Change</text>
<text x="98" y="1737.58">Key Pressure</text>
<text x="98" y="1749.14">Channel Pressure</text>
<text x="98" y="1760.70">Text</text>
<text x="98" y="1772.26">Pitch Bend</text>
<text x="98" y="1783.82">System Exclusive</text>
<text x="98" y="1795.38">(Unknown)</text>
</g>
<rect x="176.9" y="140" width="2" height="1656.4" fill="rgba(120,125,130,0.5)" shape-rendering="crispEdges"/>
<path d="M170.3,167.3 L185.6,167.3 L178,187.4 Z" fill="#c0e4fa" stroke="#5a5a5a" stroke-width="1.1"/>
<g shape-rendering="crispEdges">
<rect x="113.5" y="1799.3" width="2524.1" height="273.3" fill="#eaf6ff"/>
<rect x="113.5" y="1799.3" width="2524.1" height="1.5" fill="#cfe6f7"/>
<rect x="113.5" y="1832.70" width="2524.1" height="1.5" fill="#d2e9fa"/>
<rect x="113.5" y="1866.90" width="2524.1" height="1.5" fill="#d2e9fa"/>
<rect x="113.5" y="1901.10" width="2524.1" height="1.5" fill="#d2e9fa"/>
<rect x="113.5" y="1935.30" width="2524.1" height="1.5" fill="#d2e9fa"/>
<rect x="113.5" y="1969.50" width="2524.1" height="1.5" fill="#d2e9fa"/>
<rect x="113.5" y="2003.70" width="2524.1" height="1.5" fill="#d2e9fa"/>
<rect x="113.5" y="2037.90" width="2524.1" height="1.5" fill="#d2e9fa"/>
<rect x="150.97" y="1799.3" width="1.4" height="273.3" fill="#d2e9fa"/>
<rect x="189.54" y="1799.3" width="1.4" height="273.3" fill="#d2e9fa"/>
<rect x="228.10" y="1799.3" width="1.4" height="273.3" fill="#d2e9fa"/>
<rect x="266.67" y="1799.3" width="1.4" height="273.3" fill="#d2e9fa"/>
<rect x="305.24" y="1799.3" width="1.4" height="273.3" fill="#d2e9fa"/>
<rect x="343.81" y="1799.3" width="1.4" height="273.3" fill="#d2e9fa"/>
<rect x="382.38" y="1799.3" width="1.4" height="273.3" fill="#d2e9fa"/>
<rect x="420.94" y="1799.3" width="1.4" height="273.3" fill="#d2e9fa"/>
<rect x="459.51" y="1799.3" width="1.4" height="273.3" fill="#d2e9fa"/>
<rect x="498.08" y="1799.3" width="1.4" height="273.3" fill="#d2e9fa"/>
<rect x="536.65" y="1799.3" width="1.4" height="273.3" fill="#d2e9fa"/>
<rect x="575.22" y="1799.3" width="1.4" height="273.3" fill="#d2e9fa"/>
<rect x="613.78" y="1799.3" width="1.4" height="273.3" fill="#d2e9fa"/>
<rect x="652.35" y="1799.3" width="1.4" height="273.3" fill="#d2e9fa"/>
<rect x="690.92" y="1799.3" width="1.4" height="273.3" fill="#d2e9fa"/>
<rect x="729.49" y="1799.3" width="1.4" height="273.3" fill="#d2e9fa"/>
<rect x="768.06" y="1799.3" width="1.4" height="273.3" fill="#d2e9fa"/>
<rect x="806.62" y="1799.3" width="1.4" height="273.3" fill="#d2e9fa"/>
<rect x="845.19" y="1799.3" width="1.4" height="273.3" fill="#d2e9fa"/>
<rect x="883.76" y="1799.3" width="1.4" height="273.3" fill="#d2e9fa"/>
<rect x="922.33" y="1799.3" width="1.4" height="273.3" fill="#d2e9fa"/>
<rect x="960.90" y="1799.3" width="1.4" height="273.3" fill="#d2e9fa"/>
<rect x="999.46" y="1799.3" width="1.4" height="273.3" fill="#d2e9fa"/>
<rect x="1038.03" y="1799.3" width="1.4" height="273.3" fill="#d2e9fa"/>
<rect x="1076.60" y="1799.3" width="1.4" height="273.3" fill="#d2e9fa"/>
<rect x="1115.17" y="1799.3" width="1.4" height="273.3" fill="#d2e9fa"/>
<rect x="1153.74" y="1799.3" width="1.4" height="273.3" fill="#d2e9fa"/>
<rect x="1192.30" y="1799.3" width="1.4" height="273.3" fill="#d2e9fa"/>
<rect x="1230.87" y="1799.3" width="1.4" height="273.3" fill="#d2e9fa"/>
<rect x="1269.44" y="1799.3" width="1.4" height="273.3" fill="#d2e9fa"/>
<rect x="1308.01" y="1799.3" width="1.4" height="273.3" fill="#d2e9fa"/>
<rect x="1346.58" y="1799.3" width="1.4" height="273.3" fill="#d2e9fa"/>
<rect x="1385.14" y="1799.3" width="1.4" height="273.3" fill="#d2e9fa"/>
<rect x="1423.71" y="1799.3" width="1.4" height="273.3" fill="#d2e9fa"/>
<rect x="1462.28" y="1799.3" width="1.4" height="273.3" fill="#d2e9fa"/>
<rect x="1500.85" y="1799.3" width="1.4" height="273.3" fill="#d2e9fa"/>
<rect x="1539.42" y="1799.3" width="1.4" height="273.3" fill="#d2e9fa"/>
<rect x="1577.98" y="1799.3" width="1.4" height="273.3" fill="#d2e9fa"/>
<rect x="1616.55" y="1799.3" width="1.4" height="273.3" fill="#d2e9fa"/>
<rect x="1655.12" y="1799.3" width="1.4" height="273.3" fill="#d2e9fa"/>
<rect x="1693.69" y="1799.3" width="1.4" height="273.3" fill="#d2e9fa"/>
<rect x="1732.26" y="1799.3" width="1.4" height="273.3" fill="#d2e9fa"/>
<rect x="1770.82" y="1799.3" width="1.4" height="273.3" fill="#d2e9fa"/>
<rect x="1809.39" y="1799.3" width="1.4" height="273.3" fill="#d2e9fa"/>
<rect x="1847.96" y="1799.3" width="1.4" height="273.3" fill="#d2e9fa"/>
<rect x="1886.53" y="1799.3" width="1.4" height="273.3" fill="#d2e9fa"/>
<rect x="1925.10" y="1799.3" width="1.4" height="273.3" fill="#d2e9fa"/>
<rect x="1963.66" y="1799.3" width="1.4" height="273.3" fill="#d2e9fa"/>
<rect x="2002.23" y="1799.3" width="1.4" height="273.3" fill="#d2e9fa"/>
<rect x="2040.80" y="1799.3" width="1.4" height="273.3" fill="#d2e9fa"/>
<rect x="2079.37" y="1799.3" width="1.4" height="273.3" fill="#d2e9fa"/>
<rect x="2117.94" y="1799.3" width="1.4" height="273.3" fill="#d2e9fa"/>
<rect x="2156.50" y="1799.3" width="1.4" height="273.3" fill="#d2e9fa"/>
<rect x="2195.07" y="1799.3" width="1.4" height="273.3" fill="#d2e9fa"/>
<rect x="2233.64" y="1799.3" width="1.4" height="273.3" fill="#d2e9fa"/>
<rect x="2272.21" y="1799.3" width="1.4" height="273.3" fill="#d2e9fa"/>
<rect x="2310.78" y="1799.3" width="1.4" height="273.3" fill="#d2e9fa"/>
<rect x="2349.34" y="1799.3" width="1.4" height="273.3" fill="#d2e9fa"/>
<rect x="2387.91" y="1799.3" width="1.4" height="273.3" fill="#d2e9fa"/>
<rect x="2426.48" y="1799.3" width="1.4" height="273.3" fill="#d2e9fa"/>
<rect x="2465.05" y="1799.3" width="1.4" height="273.3" fill="#d2e9fa"/>
<rect x="2503.62" y="1799.3" width="1.4" height="273.3" fill="#d2e9fa"/>
<rect x="2542.18" y="1799.3" width="1.4" height="273.3" fill="#d2e9fa"/>
<rect x="2580.75" y="1799.3" width="1.4" height="273.3" fill="#d2e9fa"/>
<rect x="2619.32" y="1799.3" width="1.4" height="273.3" fill="#d2e9fa"/>
<rect x="113.0" y="1799.3" width="1.3" height="273.3" fill="#cfd6dc"/>
<rect x="113.5" y="2071.1" width="2525.1" height="2.5" fill="#c0c4c8"/>
</g>
<rect x="113.20" y="1859.20" width="6.2" height="212.40" fill="#505050" stroke="rgba(90,90,90,0.35)" stroke-width="0.8" rx="0.8"/><rect x="190.34" y="1859.20" width="6.2" height="212.40" fill="#505050" stroke="rgba(90,90,90,0.35)" stroke-width="0.8" rx="0.8"/><rect x="267.47" y="1859.20" width="6.2" height="212.40" fill="#505050" stroke="rgba(90,90,90,0.35)" stroke-width="0.8" rx="0.8"/><rect x="344.61" y="1859.20" width="6.2" height="212.40" fill="#505050" stroke="rgba(90,90,90,0.35)" stroke-width="0.8" rx="0.8"/><rect x="421.74" y="1859.20" width="6.2" height="212.40" fill="#505050" stroke="rgba(90,90,90,0.35)" stroke-width="0.8" rx="0.8"/><rect x="498.88" y="1859.20" width="6.2" height="212.40" fill="#505050" stroke="rgba(90,90,90,0.35)" stroke-width="0.8" rx="0.8"/><rect x="576.02" y="1859.20" width="6.2" height="212.40" fill="#505050" stroke="rgba(90,90,90,0.35)" stroke-width="0.8" rx="0.8"/><rect x="653.15" y="1859.20" width="6.2" height="212.40" fill="#505050" stroke="rgba(90,90,90,0.35)" stroke-width="0.8" rx="0.8"/><rect x="730.29" y="1859.20" width="6.2" height="212.40" fill="#505050" stroke="rgba(90,90,90,0.35)" stroke-width="0.8" rx="0.8"/><rect x="807.42" y="1859.20" width="6.2" height="212.40" fill="#505050" stroke="rgba(90,90,90,0.35)" stroke-width="0.8" rx="0.8"/><rect x="884.56" y="1859.20" width="6.2" height="212.40" fill="#505050" stroke="rgba(90,90,90,0.35)" stroke-width="0.8" rx="0.8"/><rect x="961.70" y="1859.20" width="6.2" height="212.40" fill="#505050" stroke="rgba(90,90,90,0.35)" stroke-width="0.8" rx="0.8"/><rect x="1038.83" y="1859.20" width="6.2" height="212.40" fill="#505050" stroke="rgba(90,90,90,0.35)" stroke-width="0.8" rx="0.8"/><rect x="1115.97" y="1859.20" width="6.2" height="212.40" fill="#505050" stroke="rgba(90,90,90,0.35)" stroke-width="0.8" rx="0.8"/><rect x="1193.10" y="1859.20" width="6.2" height="212.40" fill="#505050" stroke="rgba(90,90,90,0.35)" stroke-width="0.8" rx="0.8"/><rect x="1270.24" y="1859.20" width="6.2" height="212.40" fill="#505050" stroke="rgba(90,90,90,0.35)" stroke-width="0.8" rx="0.8"/><rect x="1347.38" y="1859.20" width="6.2" height="212.40" fill="#505050" stroke="rgba(90,90,90,0.35)" stroke-width="0.8" rx="0.8"/><rect x="1424.51" y="1859.20" width="6.2" height="212.40" fill="#505050" stroke="rgba(90,90,90,0.35)" stroke-width="0.8" rx="0.8"/><rect x="1501.65" y="1859.20" width="6.2" height="212.40" fill="#505050" stroke="rgba(90,90,90,0.35)" stroke-width="0.8" rx="0.8"/><rect x="1578.78" y="1859.20" width="6.2" height="212.40" fill="#505050" stroke="rgba(90,90,90,0.35)" stroke-width="0.8" rx="0.8"/><rect x="1655.92" y="1859.20" width="6.2" height="212.40" fill="#505050" stroke="rgba(90,90,90,0.35)" stroke-width="0.8" rx="0.8"/><rect x="1733.06" y="1859.20" width="6.2" height="212.40" fill="#505050" stroke="rgba(90,90,90,0.35)" stroke-width="0.8" rx="0.8"/><rect x="1810.19" y="1859.20" width="6.2" height="212.40" fill="#505050" stroke="rgba(90,90,90,0.35)" stroke-width="0.8" rx="0.8"/><rect x="1887.33" y="1859.20" width="6.2" height="212.40" fill="#505050" stroke="rgba(90,90,90,0.35)" stroke-width="0.8" rx="0.8"/><rect x="1964.46" y="1859.20" width="6.2" height="212.40" fill="#505050" stroke="rgba(90,90,90,0.35)" stroke-width="0.8" rx="0.8"/><rect x="2041.60" y="1859.20" width="6.2" height="212.40" fill="#505050" stroke="rgba(90,90,90,0.35)" stroke-width="0.8" rx="0.8"/><rect x="2118.74" y="1859.20" width="6.2" height="212.40" fill="#505050" stroke="rgba(90,90,90,0.35)" stroke-width="0.8" rx="0.8"/><rect x="2195.87" y="1859.20" width="6.2" height="212.40" fill="#505050" stroke="rgba(90,90,90,0.35)" stroke-width="0.8" rx="0.8"/><rect x="2273.01" y="1859.20" width="6.2" height="212.40" fill="#505050" stroke="rgba(90,90,90,0.35)" stroke-width="0.8" rx="0.8"/><rect x="2350.14" y="1859.20" width="6.2" height="212.40" fill="#505050" stroke="rgba(90,90,90,0.35)" stroke-width="0.8" rx="0.8"/><rect x="2427.28" y="1859.20" width="6.2" height="212.40" fill="#505050" stroke="rgba(90,90,90,0.35)" stroke-width="0.8" rx="0.8"/><rect x="2504.42" y="1859.20" width="6.2" height="212.40" fill="#505050" stroke="rgba(90,90,90,0.35)" stroke-width="0.8" rx="0.8"/><rect x="2581.55" y="1859.20" width="6.2" height="212.40" fill="#505050" stroke="rgba(90,90,90,0.35)" stroke-width="0.8" rx="0.8"/><rect x="2600.84" y="1924.20" width="6.2" height="147.40" fill="#505050" stroke="rgba(90,90,90,0.35)" stroke-width="0.8" rx="0.8"/><rect x="2620.12" y="1924.20" width="6.2" height="147.40" fill="#505050" stroke="rgba(90,90,90,0.35)" stroke-width="0.8" rx="0.8"/><rect x="2504.42" y="1868.30" width="6.2" height="203.30" fill="#32c914" stroke="rgba(90,90,90,0.35)" stroke-width="0.8" rx="0.8"/><rect x="171.05" y="1911.00" width="6.2" height="160.60" fill="#cdf100" stroke="rgba(90,90,90,0.35)" stroke-width="0.8" rx="0.8"/><rect x="248.19" y="1919.20" width="6.2" height="152.40" fill="#cdf100" stroke="rgba(90,90,90,0.35)" stroke-width="0.8" rx="0.8"/><rect x="1405.23" y="1911.00" width="6.2" height="160.60" fill="#cdf100" stroke="rgba(90,90,90,0.35)" stroke-width="0.8" rx="0.8"/><rect x="1482.36" y="1919.20" width="6.2" height="152.40" fill="#cdf100" stroke="rgba(90,90,90,0.35)" stroke-width="0.8" rx="0.8"/><rect x="325.32" y="1911.00" width="6.2" height="160.60" fill="#cdf100" stroke="rgba(90,90,90,0.35)" stroke-width="0.8" rx="0.8"/><rect x="402.46" y="1919.20" width="6.2" height="152.40" fill="#cdf100" stroke="rgba(90,90,90,0.35)" stroke-width="0.8" rx="0.8"/><rect x="1559.50" y="1911.00" width="6.2" height="160.60" fill="#cdf100" stroke="rgba(90,90,90,0.35)" stroke-width="0.8" rx="0.8"/><rect x="1636.64" y="1919.20" width="6.2" height="152.40" fill="#cdf100" stroke="rgba(90,90,90,0.35)" stroke-width="0.8" rx="0.8"/><rect x="479.60" y="1911.00" width="6.2" height="160.60" fill="#cdf100" stroke="rgba(90,90,90,0.35)" stroke-width="0.8" rx="0.8"/><rect x="556.73" y="1919.20" width="6.2" height="152.40" fill="#cdf100" stroke="rgba(90,90,90,0.35)" stroke-width="0.8" rx="0.8"/><rect x="1713.77" y="1911.00" width="6.2" height="160.60" fill="#cdf100" stroke="rgba(90,90,90,0.35)" stroke-width="0.8" rx="0.8"/><rect x="1790.91" y="1919.20" width="6.2" height="152.40" fill="#cdf100" stroke="rgba(90,90,90,0.35)" stroke-width="0.8" rx="0.8"/><rect x="633.87" y="1911.00" width="6.2" height="160.60" fill="#cdf100" stroke="rgba(90,90,90,0.35)" stroke-width="0.8" rx="0.8"/><rect x="711.00" y="1919.20" width="6.2" height="152.40" fill="#cdf100" stroke="rgba(90,90,90,0.35)" stroke-width="0.8" rx="0.8"/><rect x="1868.04" y="1911.00" width="6.2" height="160.60" fill="#cdf100" stroke="rgba(90,90,90,0.35)" stroke-width="0.8" rx="0.8"/><rect x="1945.18" y="1919.20" width="6.2" height="152.40" fill="#cdf100" stroke="rgba(90,90,90,0.35)" stroke-width="0.8" rx="0.8"/><rect x="826.71" y="1915.10" width="6.2" height="156.50" fill="#cdf100" stroke="rgba(90,90,90,0.35)" stroke-width="0.8" rx="0.8"/><rect x="980.98" y="1915.10" width="6.2" height="156.50" fill="#cdf100" stroke="rgba(90,90,90,0.35)" stroke-width="0.8" rx="0.8"/><rect x="1096.68" y="1915.10" width="6.2" height="156.50" fill="#cdf100" stroke="rgba(90,90,90,0.35)" stroke-width="0.8" rx="0.8"/><rect x="1173.82" y="1919.20" width="6.2" height="152.40" fill="#cdf100" stroke="rgba(90,90,90,0.35)" stroke-width="0.8" rx="0.8"/><rect x="1250.96" y="1915.10" width="6.2" height="156.50" fill="#cdf100" stroke="rgba(90,90,90,0.35)" stroke-width="0.8" rx="0.8"/><rect x="1328.09" y="1919.20" width="6.2" height="152.40" fill="#cdf100" stroke="rgba(90,90,90,0.35)" stroke-width="0.8" rx="0.8"/><rect x="2060.88" y="1915.10" width="6.2" height="156.50" fill="#cdf100" stroke="rgba(90,90,90,0.35)" stroke-width="0.8" rx="0.8"/><rect x="2215.16" y="1915.10" width="6.2" height="156.50" fill="#cdf100" stroke="rgba(90,90,90,0.35)" stroke-width="0.8" rx="0.8"/><rect x="2330.86" y="1911.00" width="6.2" height="160.60" fill="#cdf100" stroke="rgba(90,90,90,0.35)" stroke-width="0.8" rx="0.8"/><rect x="2408.00" y="1919.20" width="6.2" height="152.40" fill="#cdf100" stroke="rgba(90,90,90,0.35)" stroke-width="0.8" rx="0.8"/><rect x="2485.13" y="1911.00" width="6.2" height="160.60" fill="#cdf100" stroke="rgba(90,90,90,0.35)" stroke-width="0.8" rx="0.8"/><rect x="2562.27" y="1919.20" width="6.2" height="152.40" fill="#cdf100" stroke="rgba(90,90,90,0.35)" stroke-width="0.8" rx="0.8"/><rect x="113.20" y="1877.20" width="6.2" height="194.40" fill="#f14639" stroke="rgba(90,90,90,0.35)" stroke-width="0.8" rx="0.8"/><rect x="132.48" y="1877.20" width="6.2" height="194.40" fill="#f14639" stroke="rgba(90,90,90,0.35)" stroke-width="0.8" rx="0.8"/><rect x="151.77" y="1868.30" width="6.2" height="203.30" fill="#f14639" stroke="rgba(90,90,90,0.35)" stroke-width="0.8" rx="0.8"/><rect x="190.34" y="1881.30" width="6.2" height="190.30" fill="#f14639" stroke="rgba(90,90,90,0.35)" stroke-width="0.8" rx="0.8"/><rect x="209.62" y="1881.30" width="6.2" height="190.30" fill="#f14639" stroke="rgba(90,90,90,0.35)" stroke-width="0.8" rx="0.8"/><rect x="228.90" y="1872.40" width="6.2" height="199.20" fill="#f14639" stroke="rgba(90,90,90,0.35)" stroke-width="0.8" rx="0.8"/><rect x="267.47" y="1877.20" width="6.2" height="194.40" fill="#f14639" stroke="rgba(90,90,90,0.35)" stroke-width="0.8" rx="0.8"/><rect x="286.76" y="1877.20" width="6.2" height="194.40" fill="#f14639" stroke="rgba(90,90,90,0.35)" stroke-width="0.8" rx="0.8"/><rect x="306.04" y="1868.30" width="6.2" height="203.30" fill="#f14639" stroke="rgba(90,90,90,0.35)" stroke-width="0.8" rx="0.8"/><rect x="344.61" y="1881.30" width="6.2" height="190.30" fill="#f14639" stroke="rgba(90,90,90,0.35)" stroke-width="0.8" rx="0.8"/><rect x="363.89" y="1881.30" width="6.2" height="190.30" fill="#f14639" stroke="rgba(90,90,90,0.35)" stroke-width="0.8" rx="0.8"/><rect x="383.18" y="1872.40" width="6.2" height="199.20" fill="#f14639" stroke="rgba(90,90,90,0.35)" stroke-width="0.8" rx="0.8"/><rect x="421.74" y="1877.20" width="6.2" height="194.40" fill="#f14639" stroke="rgba(90,90,90,0.35)" stroke-width="0.8" rx="0.8"/><rect x="441.03" y="1877.20" width="6.2" height="194.40" fill="#f14639" stroke="rgba(90,90,90,0.35)" stroke-width="0.8" rx="0.8"/><rect x="460.31" y="1868.30" width="6.2" height="203.30" fill="#f14639" stroke="rgba(90,90,90,0.35)" stroke-width="0.8" rx="0.8"/><rect x="498.88" y="1881.30" width="6.2" height="190.30" fill="#f14639" stroke="rgba(90,90,90,0.35)" stroke-width="0.8" rx="0.8"/><rect x="518.16" y="1881.30" width="6.2" height="190.30" fill="#f14639" stroke="rgba(90,90,90,0.35)" stroke-width="0.8" rx="0.8"/><rect x="537.45" y="1872.40" width="6.2" height="199.20" fill="#f14639" stroke="rgba(90,90,90,0.35)" stroke-width="0.8" rx="0.8"/><rect x="576.02" y="1877.20" width="6.2" height="194.40" fill="#f14639" stroke="rgba(90,90,90,0.35)" stroke-width="0.8" rx="0.8"/><rect x="595.30" y="1877.20" width="6.2" height="194.40" fill="#f14639" stroke="rgba(90,90,90,0.35)" stroke-width="0.8" rx="0.8"/><rect x="614.58" y="1868.30" width="6.2" height="203.30" fill="#f14639" stroke="rgba(90,90,90,0.35)" stroke-width="0.8" rx="0.8"/><rect x="653.15" y="1881.30" width="6.2" height="190.30" fill="#f14639" stroke="rgba(90,90,90,0.35)" stroke-width="0.8" rx="0.8"/><rect x="672.44" y="1881.30" width="6.2" height="190.30" fill="#f14639" stroke="rgba(90,90,90,0.35)" stroke-width="0.8" rx="0.8"/><rect x="691.72" y="1872.40" width="6.2" height="199.20" fill="#f14639" stroke="rgba(90,90,90,0.35)" stroke-width="0.8" rx="0.8"/><rect x="730.29" y="1877.20" width="6.2" height="194.40" fill="#f14639" stroke="rgba(90,90,90,0.35)" stroke-width="0.8" rx="0.8"/><rect x="749.57" y="1877.20" width="6.2" height="194.40" fill="#f14639" stroke="rgba(90,90,90,0.35)" stroke-width="0.8" rx="0.8"/><rect x="768.86" y="1872.40" width="6.2" height="199.20" fill="#f14639" stroke="rgba(90,90,90,0.35)" stroke-width="0.8" rx="0.8"/><rect x="788.14" y="1872.40" width="6.2" height="199.20" fill="#f14639" stroke="rgba(90,90,90,0.35)" stroke-width="0.8" rx="0.8"/><rect x="807.42" y="1864.00" width="6.2" height="207.60" fill="#f14639" stroke="rgba(90,90,90,0.35)" stroke-width="0.8" rx="0.8"/><rect x="845.99" y="1877.20" width="6.2" height="194.40" fill="#f14639" stroke="rgba(90,90,90,0.35)" stroke-width="0.8" rx="0.8"/><rect x="865.28" y="1877.20" width="6.2" height="194.40" fill="#f14639" stroke="rgba(90,90,90,0.35)" stroke-width="0.8" rx="0.8"/><rect x="1964.46" y="1877.20" width="6.2" height="194.40" fill="#f14639" stroke="rgba(90,90,90,0.35)" stroke-width="0.8" rx="0.8"/><rect x="1983.75" y="1877.20" width="6.2" height="194.40" fill="#f14639" stroke="rgba(90,90,90,0.35)" stroke-width="0.8" rx="0.8"/><rect x="2003.03" y="1872.40" width="6.2" height="199.20" fill="#f14639" stroke="rgba(90,90,90,0.35)" stroke-width="0.8" rx="0.8"/><rect x="2022.32" y="1872.40" width="6.2" height="199.20" fill="#f14639" stroke="rgba(90,90,90,0.35)" stroke-width="0.8" rx="0.8"/><rect x="2041.60" y="1864.00" width="6.2" height="207.60" fill="#f14639" stroke="rgba(90,90,90,0.35)" stroke-width="0.8" rx="0.8"/><rect x="2080.17" y="1877.20" width="6.2" height="194.40" fill="#f14639" stroke="rgba(90,90,90,0.35)" stroke-width="0.8" rx="0.8"/><rect x="2099.45" y="1877.20" width="6.2" height="194.40" fill="#f14639" stroke="rgba(90,90,90,0.35)" stroke-width="0.8" rx="0.8"/><rect x="884.56" y="1877.20" width="6.2" height="194.40" fill="#f14639" stroke="rgba(90,90,90,0.35)" stroke-width="0.8" rx="0.8"/><rect x="903.84" y="1881.30" width="6.2" height="190.30" fill="#f14639" stroke="rgba(90,90,90,0.35)" stroke-width="0.8" rx="0.8"/><rect x="923.13" y="1881.30" width="6.2" height="190.30" fill="#f14639" stroke="rgba(90,90,90,0.35)" stroke-width="0.8" rx="0.8"/><rect x="942.41" y="1881.30" width="6.2" height="190.30" fill="#f14639" stroke="rgba(90,90,90,0.35)" stroke-width="0.8" rx="0.8"/><rect x="961.70" y="1872.40" width="6.2" height="199.20" fill="#f14639" stroke="rgba(90,90,90,0.35)" stroke-width="0.8" rx="0.8"/><rect x="1000.26" y="1881.30" width="6.2" height="190.30" fill="#f14639" stroke="rgba(90,90,90,0.35)" stroke-width="0.8" rx="0.8"/><rect x="1019.55" y="1881.30" width="6.2" height="190.30" fill="#f14639" stroke="rgba(90,90,90,0.35)" stroke-width="0.8" rx="0.8"/><rect x="2118.74" y="1877.20" width="6.2" height="194.40" fill="#f14639" stroke="rgba(90,90,90,0.35)" stroke-width="0.8" rx="0.8"/><rect x="2138.02" y="1881.30" width="6.2" height="190.30" fill="#f14639" stroke="rgba(90,90,90,0.35)" stroke-width="0.8" rx="0.8"/><rect x="2157.30" y="1881.30" width="6.2" height="190.30" fill="#f14639" stroke="rgba(90,90,90,0.35)" stroke-width="0.8" rx="0.8"/><rect x="2176.59" y="1881.30" width="6.2" height="190.30" fill="#f14639" stroke="rgba(90,90,90,0.35)" stroke-width="0.8" rx="0.8"/><rect x="2195.87" y="1872.40" width="6.2" height="199.20" fill="#f14639" stroke="rgba(90,90,90,0.35)" stroke-width="0.8" rx="0.8"/><rect x="2234.44" y="1881.30" width="6.2" height="190.30" fill="#f14639" stroke="rgba(90,90,90,0.35)" stroke-width="0.8" rx="0.8"/><rect x="2253.72" y="1881.30" width="6.2" height="190.30" fill="#f14639" stroke="rgba(90,90,90,0.35)" stroke-width="0.8" rx="0.8"/><rect x="1038.83" y="1877.20" width="6.2" height="194.40" fill="#f14639" stroke="rgba(90,90,90,0.35)" stroke-width="0.8" rx="0.8"/><rect x="1058.12" y="1877.20" width="6.2" height="194.40" fill="#f14639" stroke="rgba(90,90,90,0.35)" stroke-width="0.8" rx="0.8"/><rect x="1077.40" y="1864.00" width="6.2" height="207.60" fill="#f14639" stroke="rgba(90,90,90,0.35)" stroke-width="0.8" rx="0.8"/><rect x="1115.97" y="1877.20" width="6.2" height="194.40" fill="#f14639" stroke="rgba(90,90,90,0.35)" stroke-width="0.8" rx="0.8"/><rect x="1135.25" y="1881.30" width="6.2" height="190.30" fill="#f14639" stroke="rgba(90,90,90,0.35)" stroke-width="0.8" rx="0.8"/><rect x="1154.54" y="1872.40" width="6.2" height="199.20" fill="#f14639" stroke="rgba(90,90,90,0.35)" stroke-width="0.8" rx="0.8"/><rect x="2273.01" y="1877.20" width="6.2" height="194.40" fill="#f14639" stroke="rgba(90,90,90,0.35)" stroke-width="0.8" rx="0.8"/><rect x="2292.29" y="1877.20" width="6.2" height="194.40" fill="#f14639" stroke="rgba(90,90,90,0.35)" stroke-width="0.8" rx="0.8"/><rect x="2311.58" y="1864.00" width="6.2" height="207.60" fill="#f14639" stroke="rgba(90,90,90,0.35)" stroke-width="0.8" rx="0.8"/><rect x="2350.14" y="1877.20" width="6.2" height="194.40" fill="#f14639" stroke="rgba(90,90,90,0.35)" stroke-width="0.8" rx="0.8"/><rect x="2369.43" y="1881.30" width="6.2" height="190.30" fill="#f14639" stroke="rgba(90,90,90,0.35)" stroke-width="0.8" rx="0.8"/><rect x="2388.71" y="1872.40" width="6.2" height="199.20" fill="#f14639" stroke="rgba(90,90,90,0.35)" stroke-width="0.8" rx="0.8"/><rect x="1193.10" y="1877.20" width="6.2" height="194.40" fill="#f14639" stroke="rgba(90,90,90,0.35)" stroke-width="0.8" rx="0.8"/><rect x="1212.39" y="1877.20" width="6.2" height="194.40" fill="#f14639" stroke="rgba(90,90,90,0.35)" stroke-width="0.8" rx="0.8"/><rect x="1231.67" y="1864.00" width="6.2" height="207.60" fill="#f14639" stroke="rgba(90,90,90,0.35)" stroke-width="0.8" rx="0.8"/><rect x="1270.24" y="1877.20" width="6.2" height="194.40" fill="#f14639" stroke="rgba(90,90,90,0.35)" stroke-width="0.8" rx="0.8"/><rect x="1289.52" y="1881.30" width="6.2" height="190.30" fill="#f14639" stroke="rgba(90,90,90,0.35)" stroke-width="0.8" rx="0.8"/><rect x="1308.81" y="1872.40" width="6.2" height="199.20" fill="#f14639" stroke="rgba(90,90,90,0.35)" stroke-width="0.8" rx="0.8"/><rect x="2427.28" y="1877.20" width="6.2" height="194.40" fill="#f14639" stroke="rgba(90,90,90,0.35)" stroke-width="0.8" rx="0.8"/><rect x="2446.56" y="1877.20" width="6.2" height="194.40" fill="#f14639" stroke="rgba(90,90,90,0.35)" stroke-width="0.8" rx="0.8"/><rect x="2465.85" y="1864.00" width="6.2" height="207.60" fill="#f14639" stroke="rgba(90,90,90,0.35)" stroke-width="0.8" rx="0.8"/><rect x="2504.42" y="1877.20" width="6.2" height="194.40" fill="#f14639" stroke="rgba(90,90,90,0.35)" stroke-width="0.8" rx="0.8"/><rect x="2523.70" y="1881.30" width="6.2" height="190.30" fill="#f14639" stroke="rgba(90,90,90,0.35)" stroke-width="0.8" rx="0.8"/><rect x="2542.98" y="1872.40" width="6.2" height="199.20" fill="#f14639" stroke="rgba(90,90,90,0.35)" stroke-width="0.8" rx="0.8"/><rect x="1347.38" y="1877.20" width="6.2" height="194.40" fill="#f14639" stroke="rgba(90,90,90,0.35)" stroke-width="0.8" rx="0.8"/><rect x="1366.66" y="1877.20" width="6.2" height="194.40" fill="#f14639" stroke="rgba(90,90,90,0.35)" stroke-width="0.8" rx="0.8"/><rect x="1385.94" y="1868.30" width="6.2" height="203.30" fill="#f14639" stroke="rgba(90,90,90,0.35)" stroke-width="0.8" rx="0.8"/><rect x="1424.51" y="1881.30" width="6.2" height="190.30" fill="#f14639" stroke="rgba(90,90,90,0.35)" stroke-width="0.8" rx="0.8"/><rect x="1443.80" y="1881.30" width="6.2" height="190.30" fill="#f14639" stroke="rgba(90,90,90,0.35)" stroke-width="0.8" rx="0.8"/><rect x="1463.08" y="1872.40" width="6.2" height="199.20" fill="#f14639" stroke="rgba(90,90,90,0.35)" stroke-width="0.8" rx="0.8"/><rect x="1501.65" y="1877.20" width="6.2" height="194.40" fill="#f14639" stroke="rgba(90,90,90,0.35)" stroke-width="0.8" rx="0.8"/><rect x="1520.93" y="1877.20" width="6.2" height="194.40" fill="#f14639" stroke="rgba(90,90,90,0.35)" stroke-width="0.8" rx="0.8"/><rect x="1540.22" y="1868.30" width="6.2" height="203.30" fill="#f14639" stroke="rgba(90,90,90,0.35)" stroke-width="0.8" rx="0.8"/><rect x="1578.78" y="1881.30" width="6.2" height="190.30" fill="#f14639" stroke="rgba(90,90,90,0.35)" stroke-width="0.8" rx="0.8"/><rect x="1598.07" y="1881.30" width="6.2" height="190.30" fill="#f14639" stroke="rgba(90,90,90,0.35)" stroke-width="0.8" rx="0.8"/><rect x="1617.35" y="1872.40" width="6.2" height="199.20" fill="#f14639" stroke="rgba(90,90,90,0.35)" stroke-width="0.8" rx="0.8"/><rect x="1655.92" y="1877.20" width="6.2" height="194.40" fill="#f14639" stroke="rgba(90,90,90,0.35)" stroke-width="0.8" rx="0.8"/><rect x="1675.20" y="1877.20" width="6.2" height="194.40" fill="#f14639" stroke="rgba(90,90,90,0.35)" stroke-width="0.8" rx="0.8"/><rect x="1694.49" y="1868.30" width="6.2" height="203.30" fill="#f14639" stroke="rgba(90,90,90,0.35)" stroke-width="0.8" rx="0.8"/><rect x="1733.06" y="1881.30" width="6.2" height="190.30" fill="#f14639" stroke="rgba(90,90,90,0.35)" stroke-width="0.8" rx="0.8"/><rect x="1752.34" y="1881.30" width="6.2" height="190.30" fill="#f14639" stroke="rgba(90,90,90,0.35)" stroke-width="0.8" rx="0.8"/><rect x="1771.62" y="1872.40" width="6.2" height="199.20" fill="#f14639" stroke="rgba(90,90,90,0.35)" stroke-width="0.8" rx="0.8"/><rect x="1810.19" y="1877.20" width="6.2" height="194.40" fill="#f14639" stroke="rgba(90,90,90,0.35)" stroke-width="0.8" rx="0.8"/><rect x="1829.48" y="1877.20" width="6.2" height="194.40" fill="#f14639" stroke="rgba(90,90,90,0.35)" stroke-width="0.8" rx="0.8"/><rect x="1848.76" y="1868.30" width="6.2" height="203.30" fill="#f14639" stroke="rgba(90,90,90,0.35)" stroke-width="0.8" rx="0.8"/><rect x="1887.33" y="1881.30" width="6.2" height="190.30" fill="#f14639" stroke="rgba(90,90,90,0.35)" stroke-width="0.8" rx="0.8"/><rect x="1906.61" y="1881.30" width="6.2" height="190.30" fill="#f14639" stroke="rgba(90,90,90,0.35)" stroke-width="0.8" rx="0.8"/><rect x="1925.90" y="1872.40" width="6.2" height="199.20" fill="#f14639" stroke="rgba(90,90,90,0.35)" stroke-width="0.8" rx="0.8"/>
<g shape-rendering="crispEdges">
<rect x="2644.5" y="196.5" width="1.8" height="1599.9" fill="#ffffff"/>
<rect x="2644.5" y="1799.3" width="1.8" height="273.3" fill="#ffffff"/>
<rect x="113" y="2075.6" width="2549" height="1.8" fill="#ffffff"/>
</g>
<g fill="#a3a3a3">
<path d="M2650,210 L2658,210 L2654,204.5 Z"/>
<path d="M2650,1786.3 L2658,1786.3 L2654,1792 Z"/>
<path d="M2650,1810.7 L2658,1810.7 L2654,1805 Z"/>
<path d="M2650,2062 L2658,2062 L2654,2068 Z"/>
<path d="M2651,2081 L2651,2089 L2657,2085 Z"/>
<path d="M124,2081 L124,2089 L118,2085 Z"/>
</g>
</svg>
<div class="a" style="left:2668.5px;top:167.2px;width:577.3px;height:997.6px;background:#f9f9f9;border:1px solid #e3e3e3;box-sizing:border-box;border-radius:0px;"></div>
<div class="a" style="left:2739.3px;top:142.5px;width:84.9px;height:25.5px;background:#f0f0f0;border:1px solid #e3e3e3;box-sizing:border-box;border-radius:0px;"></div>
<div class="a" style="left:2668.5px;top:140.6px;width:71.1px;height:27.6px;background:#f9f9f9;border:1px solid #e3e3e3;box-sizing:border-box;border-radius:0px;border-bottom:none"></div>
<div class="t" style="left:2683.0px;top:147.95px;font-size:14.0px;color:#000;font-weight:normal;">Tracks</div>
<div class="t" style="left:2753.3px;top:149.13px;font-size:13.9px;color:#000;font-weight:normal;">Channels</div>
<svg class="a" style="left:2680px;top:180px" width="160" height="30" viewBox="2680 180 160 30">
<path d="M2695.6,188.5 V202 M2688.8,195.2 H2702.6" stroke="#000" stroke-width="2.6"/>
<line x1="2713.5" y1="185" x2="2713.5" y2="205" stroke="#c8c8c8" stroke-width="0.9"/><line x1="2774.5" y1="185" x2="2774.5" y2="205" stroke="#c8c8c8" stroke-width="0.9"/>
<g fill="#000">
<rect x="2720" y="185" width="16" height="2.2"/><rect x="2720" y="189" width="14" height="1.6"/><rect x="2720" y="190.6" width="6" height="1.6"/><rect x="2720" y="194.5" width="2.2" height="2"/><rect x="2720" y="199" width="2.2" height="2"/>
<path d="M2725,195 H2728 L2733,191 V203 L2728,199 H2725 Z"/>
<rect x="2747" y="185" width="16" height="2.2"/><rect x="2747" y="189" width="14" height="1.6"/><rect x="2747" y="190.6" width="6" height="1.6"/><rect x="2747" y="194.5" width="2.2" height="2"/><rect x="2747" y="199" width="2.2" height="2"/>
<path d="M2752,195 H2755 L2760,191 V203 L2755,199 H2752 Z"/>
<rect x="2781" y="185" width="16" height="2.2"/><rect x="2781" y="189" width="16" height="1.6"/><rect x="2781" y="190.6" width="3" height="1.6"/><rect x="2781" y="194.5" width="2.2" height="2"/><rect x="2781" y="199" width="2.2" height="2"/>
</g>
<path d="M2735.5,192 Q2739,197 2735.5,202.5 M2738.5,190.5 Q2743,197 2738.5,204" fill="none" stroke="#000" stroke-width="1.3"/>
<path d="M2762,196.5 L2766,200.5 M2766,196.5 L2762,200.5" stroke="#000" stroke-width="1.3"/>
<path d="M2784.6,199 Q2792.2,191 2799.8,199 Q2792.2,207 2784.6,199 Z" fill="#000"/><circle cx="2792.2" cy="199" r="2.8" fill="#f9f9f9"/><circle cx="2792.2" cy="199" r="1.5" fill="#000"/><path d="M2785.5,194.6 Q2792.2,189.2 2799,194.6" fill="none" stroke="#000" stroke-width="1.2"/>
<g fill="#000"><rect x="2808" y="185" width="16" height="2.2"/><rect x="2808" y="189" width="16" height="1.6"/><rect x="2808" y="190.6" width="3" height="1.6"/><rect x="2808" y="194.5" width="2.2" height="2"/><rect x="2808" y="199" width="2.2" height="2"/></g>
<path d="M2811.6,199 Q2819.2,191 2826.8,199 Q2819.2,207 2811.6,199 Z" fill="#a8a8a8"/><circle cx="2819.2" cy="199" r="2.8" fill="#f9f9f9"/><circle cx="2819.2" cy="199" r="1.5" fill="#a8a8a8"/><path d="M2812.5,194.6 Q2819.2,189.2 2826,194.6" fill="none" stroke="#a8a8a8" stroke-width="1.2"/>
</svg>
<div class="a" style="left:2680.6px;top:216.8px;width:553.0px;height:934.5px;background:#ffffff;border:1.6px solid #6f7a86;box-sizing:border-box;border-radius:0px;"></div>
<div class="a" style="left:2699.2px;top:233.8px;width:28.7px;height:28.7px;border-radius:50%;background:#3232ff;box-shadow:0 0 0 0.8px rgba(120,120,120,0.45)"></div>
<div class="t" style="left:2736.0px;top:234.76px;font-size:14.1px;color:#000;font-weight:normal;">Track 0</div>
<div class="t" style="left:2736.0px;top:252.64px;font-size:14.6px;color:#000;font-weight:normal;">Tempo Track</div>
<div class="a" style="left:2683.0px;top:302.8px;width:548.0px;height:1.5px;background:#d4d4d4;border-radius:0px;"></div>
<div class="a" style="left:2738.2px;top:271.2px;width:18.4px;height:16.5px;background:#cce8fc;border:1px solid #a9d8fb;box-sizing:border-box;border-radius:2.5px;"></div>
<div class="a" style="left:2756.4px;top:271.2px;width:19.4px;height:16.5px;background:#cce8fc;border:1px solid #a9d8fb;box-sizing:border-box;border-radius:2.5px;"></div>
<svg class="a" style="left:2736px;top:268.0px" width="86" height="24" viewBox="2736 268 86 24">
<path d="M2741.6,282 Q2748,275.2 2754.4,282 Q2748,288.8 2741.6,282 Z" fill="#000"/><circle cx="2748" cy="282" r="2.4" fill="#cce8fc"/><circle cx="2748" cy="282" r="1.3" fill="#000"/><path d="M2742.3,278.2 Q2748,273.2 2753.7,278.2" fill="none" stroke="#000" stroke-width="1.1"/>
<path d="M2760.7,279.2 H2762.8 L2765.6,276.2 V285.6 L2762.8,282.8 H2760.7 Z" fill="#000"/><path d="M2767.6,278.2 Q2769.6,281 2767.6,283.8 M2770,276.6 Q2773,281 2770,285.4" fill="none" stroke="#000" stroke-width="1.2"/>
<line x1="2779.4" y1="274" x2="2779.4" y2="286" stroke="#c8c8c8" stroke-width="0.9"/>
<text x="2789" y="285.3" font-family="&quot;Liberation Serif&quot;,serif" font-weight="bold" font-size="14.5" fill="#000">T</text><text x="2785.6" y="285.5" font-family="&quot;Liberation Serif&quot;,serif" font-weight="bold" font-size="8" fill="#000">T</text>
<path d="M2805.8,274.5 H2815.8 L2814.6,286 H2807 Z" fill="#000"/><rect x="2807.3" y="275.7" width="7" height="0.9" fill="#888"/>
</svg>
<div class="a" style="left:2699.2px;top:318.8px;width:28.7px;height:28.7px;border-radius:50%;background:#f14639;box-shadow:0 0 0 0.8px rgba(120,120,120,0.45)"></div>
<div class="t" style="left:2736.0px;top:319.76px;font-size:14.1px;color:#000;font-weight:normal;">Track 1</div>
<div class="t" style="left:2736.0px;top:337.64px;font-size:14.6px;color:#000;font-weight:normal;">Lead Square</div>
<div class="a" style="left:2683.0px;top:387.8px;width:548.0px;height:1.5px;background:#d4d4d4;border-radius:0px;"></div>
<div class="a" style="left:2738.2px;top:356.2px;width:18.4px;height:16.5px;background:#cce8fc;border:1px solid #a9d8fb;box-sizing:border-box;border-radius:2.5px;"></div>
<div class="a" style="left:2756.4px;top:356.2px;width:19.4px;height:16.5px;background:#cce8fc;border:1px solid #a9d8fb;box-sizing:border-box;border-radius:2.5px;"></div>
<svg class="a" style="left:2736px;top:353.0px" width="86" height="24" viewBox="2736 268 86 24">
<path d="M2741.6,282 Q2748,275.2 2754.4,282 Q2748,288.8 2741.6,282 Z" fill="#000"/><circle cx="2748" cy="282" r="2.4" fill="#cce8fc"/><circle cx="2748" cy="282" r="1.3" fill="#000"/><path d="M2742.3,278.2 Q2748,273.2 2753.7,278.2" fill="none" stroke="#000" stroke-width="1.1"/>
<path d="M2760.7,279.2 H2762.8 L2765.6,276.2 V285.6 L2762.8,282.8 H2760.7 Z" fill="#000"/><path d="M2767.6,278.2 Q2769.6,281 2767.6,283.8 M2770,276.6 Q2773,281 2770,285.4" fill="none" stroke="#000" stroke-width="1.2"/>
<line x1="2779.4" y1="274" x2="2779.4" y2="286" stroke="#c8c8c8" stroke-width="0.9"/>
<text x="2789" y="285.3" font-family="&quot;Liberation Serif&quot;,serif" font-weight="bold" font-size="14.5" fill="#000">T</text><text x="2785.6" y="285.5" font-family="&quot;Liberation Serif&quot;,serif" font-weight="bold" font-size="8" fill="#000">T</text>
<path d="M2805.8,274.5 H2815.8 L2814.6,286 H2807 Z" fill="#000"/><rect x="2807.3" y="275.7" width="7" height="0.9" fill="#888"/>
</svg>
<div class="a" style="left:2699.2px;top:403.8px;width:28.7px;height:28.7px;border-radius:50%;background:#cdf100;box-shadow:0 0 0 0.8px rgba(120,120,120,0.45)"></div>
<div class="t" style="left:2736.0px;top:404.76px;font-size:14.1px;color:#000;font-weight:normal;">Track 2</div>
<div class="t" style="left:2736.0px;top:422.64px;font-size:14.6px;color:#000;font-weight:normal;">Arp Square</div>
<div class="a" style="left:2683.0px;top:472.8px;width:548.0px;height:1.5px;background:#d4d4d4;border-radius:0px;"></div>
<div class="a" style="left:2738.2px;top:441.2px;width:18.4px;height:16.5px;background:#cce8fc;border:1px solid #a9d8fb;box-sizing:border-box;border-radius:2.5px;"></div>
<div class="a" style="left:2756.4px;top:441.2px;width:19.4px;height:16.5px;background:#cce8fc;border:1px solid #a9d8fb;box-sizing:border-box;border-radius:2.5px;"></div>
<svg class="a" style="left:2736px;top:438.0px" width="86" height="24" viewBox="2736 268 86 24">
<path d="M2741.6,282 Q2748,275.2 2754.4,282 Q2748,288.8 2741.6,282 Z" fill="#000"/><circle cx="2748" cy="282" r="2.4" fill="#cce8fc"/><circle cx="2748" cy="282" r="1.3" fill="#000"/><path d="M2742.3,278.2 Q2748,273.2 2753.7,278.2" fill="none" stroke="#000" stroke-width="1.1"/>
<path d="M2760.7,279.2 H2762.8 L2765.6,276.2 V285.6 L2762.8,282.8 H2760.7 Z" fill="#000"/><path d="M2767.6,278.2 Q2769.6,281 2767.6,283.8 M2770,276.6 Q2773,281 2770,285.4" fill="none" stroke="#000" stroke-width="1.2"/>
<line x1="2779.4" y1="274" x2="2779.4" y2="286" stroke="#c8c8c8" stroke-width="0.9"/>
<text x="2789" y="285.3" font-family="&quot;Liberation Serif&quot;,serif" font-weight="bold" font-size="14.5" fill="#000">T</text><text x="2785.6" y="285.5" font-family="&quot;Liberation Serif&quot;,serif" font-weight="bold" font-size="8" fill="#000">T</text>
<path d="M2805.8,274.5 H2815.8 L2814.6,286 H2807 Z" fill="#000"/><rect x="2807.3" y="275.7" width="7" height="0.9" fill="#888"/>
</svg>
<div class="a" style="left:2699.2px;top:488.8px;width:28.7px;height:28.7px;border-radius:50%;background:#32c914;box-shadow:0 0 0 0.8px rgba(120,120,120,0.45)"></div>
<div class="t" style="left:2736.0px;top:489.76px;font-size:14.1px;color:#000;font-weight:normal;">Track 3</div>
<div class="t" style="left:2736.0px;top:507.64px;font-size:14.6px;color:#000;font-weight:normal;">Bass Line</div>
<div class="a" style="left:2683.0px;top:557.8px;width:548.0px;height:1.5px;background:#d4d4d4;border-radius:0px;"></div>
<div class="a" style="left:2738.2px;top:526.2px;width:18.4px;height:16.5px;background:#cce8fc;border:1px solid #a9d8fb;box-sizing:border-box;border-radius:2.5px;"></div>
<div class="a" style="left:2756.4px;top:526.2px;width:19.4px;height:16.5px;background:#cce8fc;border:1px solid #a9d8fb;box-sizing:border-box;border-radius:2.5px;"></div>
<svg class="a" style="left:2736px;top:523.0px" width="86" height="24" viewBox="2736 268 86 24">
<path d="M2741.6,282 Q2748,275.2 2754.4,282 Q2748,288.8 2741.6,282 Z" fill="#000"/><circle cx="2748" cy="282" r="2.4" fill="#cce8fc"/><circle cx="2748" cy="282" r="1.3" fill="#000"/><path d="M2742.3,278.2 Q2748,273.2 2753.7,278.2" fill="none" stroke="#000" stroke-width="1.1"/>
<path d="M2760.7,279.2 H2762.8 L2765.6,276.2 V285.6 L2762.8,282.8 H2760.7 Z" fill="#000"/><path d="M2767.6,278.2 Q2769.6,281 2767.6,283.8 M2770,276.6 Q2773,281 2770,285.4" fill="none" stroke="#000" stroke-width="1.2"/>
<line x1="2779.4" y1="274" x2="2779.4" y2="286" stroke="#c8c8c8" stroke-width="0.9"/>
<text x="2789" y="285.3" font-family="&quot;Liberation Serif&quot;,serif" font-weight="bold" font-size="14.5" fill="#000">T</text><text x="2785.6" y="285.5" font-family="&quot;Liberation Serif&quot;,serif" font-weight="bold" font-size="8" fill="#000">T</text>
<path d="M2805.8,274.5 H2815.8 L2814.6,286 H2807 Z" fill="#000"/><rect x="2807.3" y="275.7" width="7" height="0.9" fill="#888"/>
</svg>
<div class="a" style="left:2699.2px;top:573.9px;width:28.7px;height:28.7px;border-radius:50%;background:#6bf1e7;box-shadow:0 0 0 0.8px rgba(120,120,120,0.45)"></div>
<div class="t" style="left:2736.0px;top:574.76px;font-size:14.1px;color:#000;font-weight:normal;">Track 4</div>
<div class="t" style="left:2736.0px;top:592.64px;font-size:14.6px;color:#000;font-weight:normal;">Drums</div>
<div class="a" style="left:2683.0px;top:642.8px;width:548.0px;height:1.5px;background:#d4d4d4;border-radius:0px;"></div>
<div class="a" style="left:2738.2px;top:611.2px;width:18.4px;height:16.5px;background:#cce8fc;border:1px solid #a9d8fb;box-sizing:border-box;border-radius:2.5px;"></div>
<div class="a" style="left:2756.4px;top:611.2px;width:19.4px;height:16.5px;background:#cce8fc;border:1px solid #a9d8fb;box-sizing:border-box;border-radius:2.5px;"></div>
<svg class="a" style="left:2736px;top:608.0px" width="86" height="24" viewBox="2736 268 86 24">
<path d="M2741.6,282 Q2748,275.2 2754.4,282 Q2748,288.8 2741.6,282 Z" fill="#000"/><circle cx="2748" cy="282" r="2.4" fill="#cce8fc"/><circle cx="2748" cy="282" r="1.3" fill="#000"/><path d="M2742.3,278.2 Q2748,273.2 2753.7,278.2" fill="none" stroke="#000" stroke-width="1.1"/>
<path d="M2760.7,279.2 H2762.8 L2765.6,276.2 V285.6 L2762.8,282.8 H2760.7 Z" fill="#000"/><path d="M2767.6,278.2 Q2769.6,281 2767.6,283.8 M2770,276.6 Q2773,281 2770,285.4" fill="none" stroke="#000" stroke-width="1.2"/>
<line x1="2779.4" y1="274" x2="2779.4" y2="286" stroke="#c8c8c8" stroke-width="0.9"/>
<text x="2789" y="285.3" font-family="&quot;Liberation Serif&quot;,serif" font-weight="bold" font-size="14.5" fill="#000">T</text><text x="2785.6" y="285.5" font-family="&quot;Liberation Serif&quot;,serif" font-weight="bold" font-size="8" fill="#000">T</text>
<path d="M2805.8,274.5 H2815.8 L2814.6,286 H2807 Z" fill="#000"/><rect x="2807.3" y="275.7" width="7" height="0.9" fill="#888"/>
</svg>
<div class="a" style="left:2668.5px;top:1199.8px;width:577.3px;height:782.0px;background:#f9f9f9;border:1px solid #e3e3e3;box-sizing:border-box;border-radius:0px;"></div>
<div class="a" style="left:2755.0px;top:1174.8px;width:62.2px;height:25.7px;background:#f0f0f0;border:1px solid #e3e3e3;box-sizing:border-box;border-radius:0px;"></div>
<div class="a" style="left:2668.5px;top:1172.5px;width:86.8px;height:28.5px;background:#f9f9f9;border:1px solid #e3e3e3;box-sizing:border-box;border-radius:0px;border-bottom:none"></div>
<div class="t" style="left:2683.5px;top:1179.39px;font-size:14.9px;color:#000;font-weight:normal;">Protocol</div>
<div class="t" style="left:2769.9px;top:1180.84px;font-size:14.6px;color:#000;font-weight:normal;">Event</div>
<div class="a" style="left:2669.6px;top:1200.6px;width:574.8px;height:778.4px;background:#ffffff;border:1.6px solid #6f7a86;box-sizing:border-box;border-radius:0px;"></div>
<div class="t" style="left:2696.3px;top:1209.96px;font-size:14.7px;color:#000;font-weight:normal;">File opened</div>
<div class="a" style="left:2672.0px;top:1232.0px;width:570.0px;height:1.4px;background:#d4d4d4;border-radius:0px;"></div>
<div class="t" style="left:2696.3px;top:1240.20px;font-size:14.65px;color:#000;font-weight:normal;">MidiPilot Agent: Copy measures 1-4 and paste them at measure 9. Then copy m...</div>
<div class="a" style="left:2672.0px;top:1261.7px;width:570.0px;height:1.4px;background:#d4d4d4;border-radius:0px;"></div>
<div class="t" style="left:2696.3px;top:1270.18px;font-size:14.2px;color:#000;font-weight:bold;">Selection changed</div>
<div class="a" style="left:2672.0px;top:1291.9px;width:570.0px;height:1.4px;background:#d4d4d4;border-radius:0px;"></div>
<svg class="a" style="left:2674px;top:1268px" width="20" height="20" viewBox="2674 1268 20 20"><rect x="2675.2" y="1270.3" width="10" height="7.5" fill="none" stroke="#000" stroke-width="0.9" stroke-dasharray="2,1.5"/>
<path d="M2684,1275 L2684.5,1284.5 L2686.5,1282.5 L2688.5,1285.5 L2689.8,1284.6 L2687.8,1281.7 L2690.3,1281.3 Z" fill="#000"/></svg>
<div class="t" style="left:2679.0px;top:2004.34px;font-size:14.6px;color:#000;font-weight:normal;">Add new events to ...</div>
<div class="t" style="left:2679.3px;top:2033.94px;font-size:14.6px;color:#000;font-weight:normal;">Track:</div>
<div class="t" style="left:2679.3px;top:2066.24px;font-size:14.6px;color:#000;font-weight:normal;">Channel:</div>
<div class="a" style="left:2746.3px;top:2027.6px;width:489.8px;height:23.8px;background:#fdfdfd;border:1px solid #d6d6d6;box-sizing:border-box;border-radius:2.5px;"></div>
<div class="a" style="left:2746.3px;top:2059.9px;width:489.8px;height:23.8px;background:#fdfdfd;border:1px solid #d6d6d6;box-sizing:border-box;border-radius:2.5px;"></div>
<div class="t" style="left:2750.4px;top:2033.94px;font-size:14.6px;color:#000;font-weight:normal;">Track 1: Lead Square</div>
<div class="t" style="left:2750.4px;top:2066.24px;font-size:14.6px;color:#000;font-weight:normal;">Channel 0</div>
<svg class="a" style="left:3220.5px;top:2035.5px" width="11.5" height="7.0"><path d="M1,1 L5.8,6.0 L10.5,1" fill="none" stroke="#333" stroke-width="1.1"/></svg>
<svg class="a" style="left:3220.5px;top:2068.0px" width="11.5" height="7.0"><path d="M1,1 L5.8,6.0 L10.5,1" fill="none" stroke="#333" stroke-width="1.1"/></svg>
<div class="a" style="left:3256.1px;top:56.2px;width:583.5px;height:26.6px;background:#dadada;border:1px solid #b3b3b3;box-sizing:border-box;border-radius:0px;"></div>
<div class="t" style="left:3261.6px;top:62.69px;font-size:15.6px;color:#111;font-weight:normal;">MidiPilot</div>
<svg class="a" style="left:3790px;top:60px" width="50" height="20" viewBox="3790 60 50 20">
<rect x="3798" y="64.5" width="6.6" height="6.5" fill="none" stroke="#222" stroke-width="1.2"/><rect x="3797.8" y="64.3" width="7" height="1.6" fill="#222"/>
<rect x="3795.5" y="68.6" width="7" height="6" fill="#eee" stroke="#444" stroke-width="1.2"/><rect x="3795.3" y="68.4" width="7.4" height="1.6" fill="#333"/>
<path d="M3821.5,66 L3830.5,74.5 M3830.5,66 L3821.5,74.5" stroke="#333" stroke-width="1.9"/></svg>
<div class="t" style="left:3268.0px;top:95.77px;font-size:10.9px;color:#7b7b7b;font-weight:normal;">Track 1 | (Lead Square) | Ch 0 | Measure 2</div>
<div class="a" style="left:3305.9px;top:1127.0px;width:524.5px;height:67.8px;background:#0078d4;border-radius:12px;"></div>
<div class="t" style="left:3328.3px;top:1144.68px;font-size:14.55px;color:#ffffff;font-weight:normal;">[19:38:16] Copy measures 1-4 and paste them at measure 9. Then copy</div>
<div class="t" style="left:3328.3px;top:1164.58px;font-size:14.55px;color:#ffffff;font-weight:normal;">measures 5-8 and paste at measure 13 to create an AABB form.</div>
<svg class="a" style="left:3270px;top:1210px" width="40" height="25" viewBox="3270 1210 40 25"><path d="M3277.6,1218.5 L3287,1218.5 L3282.3,1226.8 Z" fill="#505050"/></svg>
<svg class="a" style="left:3292.2px;top:1217.0px" width="12.9" height="12.0" viewBox="0 0 12.9 12.0"><rect x="0" y="0" width="12.9" height="12.0" rx="2" fill="#1ecb68"/><path d="M2.8,6.2 L5.5,8.9 L10.3,3.6" fill="none" stroke="#fff" stroke-width="1.7"/></svg>
<div class="t" style="left:3310.9px;top:1216.59px;font-size:12.3px;color:#555555;font-weight:bold;">Steps (19/19)</div>
<svg class="a" style="left:3284.0px;top:1242.2px" width="11.2" height="10.9" viewBox="0 0 11.2 10.9"><rect x="0" y="0" width="11.2" height="10.9" rx="2" fill="#1ecb68"/><path d="M2.5,5.7 L4.8,8.1 L9.0,3.3" fill="none" stroke="#fff" stroke-width="1.7"/></svg>
<div class="t" style="left:3300.0px;top:1241.57px;font-size:10.9px;color:#2e8b3e;font-weight:normal;">Query events — Track 0</div>
<svg class="a" style="left:3284.0px;top:1260.2px" width="11.2" height="10.9" viewBox="0 0 11.2 10.9"><rect x="0" y="0" width="11.2" height="10.9" rx="2" fill="#1ecb68"/><path d="M2.5,5.7 L4.8,8.1 L9.0,3.3" fill="none" stroke="#fff" stroke-width="1.7"/></svg>
<div class="t" style="left:3300.0px;top:1259.57px;font-size:10.9px;color:#2e8b3e;font-weight:normal;">Query events — Track 1</div>
<svg class="a" style="left:3284.0px;top:1278.2px" width="11.2" height="10.9" viewBox="0 0 11.2 10.9"><rect x="0" y="0" width="11.2" height="10.9" rx="2" fill="#1ecb68"/><path d="M2.5,5.7 L4.8,8.1 L9.0,3.3" fill="none" stroke="#fff" stroke-width="1.7"/></svg>
<div class="t" style="left:3300.0px;top:1277.57px;font-size:10.9px;color:#2e8b3e;font-weight:normal;">Query events — Track 2</div>
<svg class="a" style="left:3284.0px;top:1296.2px" width="11.2" height="10.9" viewBox="0 0 11.2 10.9"><rect x="0" y="0" width="11.2" height="10.9" rx="2" fill="#1ecb68"/><path d="M2.5,5.7 L4.8,8.1 L9.0,3.3" fill="none" stroke="#fff" stroke-width="1.7"/></svg>
<div class="t" style="left:3300.0px;top:1295.57px;font-size:10.9px;color:#2e8b3e;font-weight:normal;">Query events — Track 3</div>
<svg class="a" style="left:3284.0px;top:1314.2px" width="11.2" height="10.9" viewBox="0 0 11.2 10.9"><rect x="0" y="0" width="11.2" height="10.9" rx="2" fill="#1ecb68"/><path d="M2.5,5.7 L4.8,8.1 L9.0,3.3" fill="none" stroke="#fff" stroke-width="1.7"/></svg>
<div class="t" style="left:3300.0px;top:1313.57px;font-size:10.9px;color:#2e8b3e;font-weight:normal;">Query events — Track 4</div>
<svg class="a" style="left:3284.0px;top:1332.2px" width="11.2" height="10.9" viewBox="0 0 11.2 10.9"><rect x="0" y="0" width="11.2" height="10.9" rx="2" fill="#1ecb68"/><path d="M2.5,5.7 L4.8,8.1 L9.0,3.3" fill="none" stroke="#fff" stroke-width="1.7"/></svg>
<div class="t" style="left:3300.0px;top:1331.57px;font-size:10.9px;color:#2e8b3e;font-weight:normal;">Query events — Track 0</div>
<svg class="a" style="left:3284.0px;top:1350.2px" width="11.2" height="10.9" viewBox="0 0 11.2 10.9"><rect x="0" y="0" width="11.2" height="10.9" rx="2" fill="#1ecb68"/><path d="M2.5,5.7 L4.8,8.1 L9.0,3.3" fill="none" stroke="#fff" stroke-width="1.7"/></svg>
<div class="t" style="left:3300.0px;top:1349.57px;font-size:10.9px;color:#2e8b3e;font-weight:normal;">Query events — Track 1</div>
<svg class="a" style="left:3284.0px;top:1368.2px" width="11.2" height="10.9" viewBox="0 0 11.2 10.9"><rect x="0" y="0" width="11.2" height="10.9" rx="2" fill="#1ecb68"/><path d="M2.5,5.7 L4.8,8.1 L9.0,3.3" fill="none" stroke="#fff" stroke-width="1.7"/></svg>
<div class="t" style="left:3300.0px;top:1367.57px;font-size:10.9px;color:#2e8b3e;font-weight:normal;">Query events — Track 2</div>
<svg class="a" style="left:3284.0px;top:1386.2px" width="11.2" height="10.9" viewBox="0 0 11.2 10.9"><rect x="0" y="0" width="11.2" height="10.9" rx="2" fill="#1ecb68"/><path d="M2.5,5.7 L4.8,8.1 L9.0,3.3" fill="none" stroke="#fff" stroke-width="1.7"/></svg>
<div class="t" style="left:3300.0px;top:1385.57px;font-size:10.9px;color:#2e8b3e;font-weight:normal;">Query events — Track 3</div>
<svg class="a" style="left:3284.0px;top:1404.2px" width="11.2" height="10.9" viewBox="0 0 11.2 10.9"><rect x="0" y="0" width="11.2" height="10.9" rx="2" fill="#1ecb68"/><path d="M2.5,5.7 L4.8,8.1 L9.0,3.3" fill="none" stroke="#fff" stroke-width="1.7"/></svg>
<div class="t" style="left:3300.0px;top:1403.57px;font-size:10.9px;color:#2e8b3e;font-weight:normal;">Query events — Track 4</div>
<svg class="a" style="left:3284.0px;top:1422.2px" width="11.2" height="10.9" viewBox="0 0 11.2 10.9"><rect x="0" y="0" width="11.2" height="10.9" rx="2" fill="#1ecb68"/><path d="M2.5,5.7 L4.8,8.1 L9.0,3.3" fill="none" stroke="#fff" stroke-width="1.7"/></svg>
<div class="t" style="left:3300.0px;top:1421.57px;font-size:10.9px;color:#2e8b3e;font-weight:normal;">Replace events — Track 4 (41 events)</div>
<svg class="a" style="left:3284.0px;top:1440.2px" width="11.2" height="10.9" viewBox="0 0 11.2 10.9"><rect x="0" y="0" width="11.2" height="10.9" rx="2" fill="#1ecb68"/><path d="M2.5,5.7 L4.8,8.1 L9.0,3.3" fill="none" stroke="#fff" stroke-width="1.7"/></svg>
<div class="t" style="left:3300.0px;top:1439.57px;font-size:10.9px;color:#2e8b3e;font-weight:normal;">Replace events — Track 3 (8 events)</div>
<svg class="a" style="left:3284.0px;top:1458.2px" width="11.2" height="10.9" viewBox="0 0 11.2 10.9"><rect x="0" y="0" width="11.2" height="10.9" rx="2" fill="#1ecb68"/><path d="M2.5,5.7 L4.8,8.1 L9.0,3.3" fill="none" stroke="#fff" stroke-width="1.7"/></svg>
<div class="t" style="left:3300.0px;top:1457.57px;font-size:10.9px;color:#2e8b3e;font-weight:normal;">Replace events — Track 2 (32 events)</div>
<svg class="a" style="left:3284.0px;top:1476.2px" width="11.2" height="10.9" viewBox="0 0 11.2 10.9"><rect x="0" y="0" width="11.2" height="10.9" rx="2" fill="#1ecb68"/><path d="M2.5,5.7 L4.8,8.1 L9.0,3.3" fill="none" stroke="#fff" stroke-width="1.7"/></svg>
<div class="t" style="left:3300.0px;top:1475.57px;font-size:10.9px;color:#2e8b3e;font-weight:normal;">Replace events — Track 1 (24 events)</div>
<svg class="a" style="left:3283.5px;top:1493.3px" width="12" height="11" viewBox="0 0 12 11"><path d="M6,0.5 L11.5,10.5 L0.5,10.5 Z" fill="#f5b400"/><rect x="5.3" y="3.5" width="1.4" height="4" fill="#222"/><rect x="5.3" y="8.3" width="1.4" height="1.3" fill="#222"/></svg>
<div class="t" style="left:3300.0px;top:1493.57px;font-size:10.9px;color:#d9822b;font-weight:normal;">Replace events — Track 0 (0 events) - retrying</div>
<svg class="a" style="left:3284.0px;top:1512.2px" width="11.2" height="10.9" viewBox="0 0 11.2 10.9"><rect x="0" y="0" width="11.2" height="10.9" rx="2" fill="#1ecb68"/><path d="M2.5,5.7 L4.8,8.1 L9.0,3.3" fill="none" stroke="#fff" stroke-width="1.7"/></svg>
<div class="t" style="left:3300.0px;top:1511.57px;font-size:10.9px;color:#2e8b3e;font-weight:normal;">Replace events — Track 4 (40 events)</div>
<svg class="a" style="left:3284.0px;top:1530.2px" width="11.2" height="10.9" viewBox="0 0 11.2 10.9"><rect x="0" y="0" width="11.2" height="10.9" rx="2" fill="#1ecb68"/><path d="M2.5,5.7 L4.8,8.1 L9.0,3.3" fill="none" stroke="#fff" stroke-width="1.7"/></svg>
<div class="t" style="left:3300.0px;top:1529.57px;font-size:10.9px;color:#2e8b3e;font-weight:normal;">Replace events — Track 3 (8 events)</div>
<svg class="a" style="left:3284.0px;top:1548.2px" width="11.2" height="10.9" viewBox="0 0 11.2 10.9"><rect x="0" y="0" width="11.2" height="10.9" rx="2" fill="#1ecb68"/><path d="M2.5,5.7 L4.8,8.1 L9.0,3.3" fill="none" stroke="#fff" stroke-width="1.7"/></svg>
<div class="t" style="left:3300.0px;top:1547.57px;font-size:10.9px;color:#2e8b3e;font-weight:normal;">Replace events — Track 2 (32 events)</div>
<svg class="a" style="left:3284.0px;top:1566.2px" width="11.2" height="10.9" viewBox="0 0 11.2 10.9"><rect x="0" y="0" width="11.2" height="10.9" rx="2" fill="#1ecb68"/><path d="M2.5,5.7 L4.8,8.1 L9.0,3.3" fill="none" stroke="#fff" stroke-width="1.7"/></svg>
<div class="t" style="left:3300.0px;top:1565.57px;font-size:10.9px;color:#2e8b3e;font-weight:normal;">Replace events — Track 1 (26 events)</div>
<div class="a" style="left:3266.0px;top:1596.8px;width:524.2px;height:267.7px;background:#e8e8e8;border-radius:12px;"></div>
<div class="t" style="left:3288.3px;top:1614.71px;font-size:14.75px;color:#000;font-weight:normal;">[19:40:19] Copied the arrangement to create AABB form:</div>
<div class="t" style="left:3288.3px;top:1654.51px;font-size:14.75px;color:#000;font-weight:normal;">- Measures 1–4 copied to measure 9</div>
<div class="t" style="left:3288.3px;top:1674.41px;font-size:14.75px;color:#000;font-weight:normal;">- Measures 5–8 copied to measure 13</div>
<div class="t" style="left:3288.3px;top:1714.21px;font-size:14.75px;color:#000;font-weight:normal;">Updated tracks:</div>
<div class="t" style="left:3288.3px;top:1734.11px;font-size:14.75px;color:#000;font-weight:normal;">- Lead Square</div>
<div class="t" style="left:3288.3px;top:1754.01px;font-size:14.75px;color:#000;font-weight:normal;">- Arp Square</div>
<div class="t" style="left:3288.3px;top:1773.91px;font-size:14.75px;color:#000;font-weight:normal;">- Bass Line</div>
<div class="t" style="left:3288.3px;top:1793.81px;font-size:14.75px;color:#000;font-weight:normal;">- Drums</div>
<div class="t" style="left:3288.3px;top:1833.61px;font-size:14.75px;color:#000;font-weight:normal;">The section from measures 9–16 now mirrors measures 1–8.</div>
<div class="a" style="left:3262.3px;top:1873.3px;width:571.2px;height:161.5px;background:#f0f0f0;border:1.6px solid #6f7a86;box-sizing:border-box;border-radius:0px;"></div>
<div class="a" style="left:3268.0px;top:1879.0px;width:560.0px;height:118.8px;background:#ffffff;border-radius:0px;border-bottom:2px solid #555;box-sizing:border-box"></div>
<div class="t" style="left:3272.4px;top:1886.26px;font-size:14.7px;color:#7a7a7a;font-weight:normal;">Ask MidiPilot... (Enter to send, Shift+Enter for newline)</div>
<svg class="a" style="left:3270px;top:2005px" width="22" height="22" viewBox="3270 2005 22 22">
<path d="M3275,2009.5 H3286 a1.8,1.8 0 0 1 1.8,1.8 V2017.5 a1.8,1.8 0 0 1 -1.8,1.8 H3280 L3277.5,2022 V2019.3 H3275 a1.8,1.8 0 0 1 -1.8,-1.8 V2011.3 a1.8,1.8 0 0 1 1.8,-1.8 Z" fill="none" stroke="#111" stroke-width="1.4"/>
<path d="M3276.5,2012.8 H3284.5 M3276.5,2015.6 H3282" stroke="#111" stroke-width="1.3"/><path d="M3286,2020.5 V2024.5 M3284,2022.5 H3288" stroke="#111" stroke-width="1.5"/></svg>
<div class="a" style="left:3299.4px;top:2002.4px;width:68.8px;height:27.1px;background:#fdfdfd;border:1px solid #d7d7d7;box-sizing:border-box;border-radius:2.5px;"></div>
<div class="t" style="left:3303.3px;top:2009.36px;font-size:14.7px;color:#000;font-weight:normal;">Agent</div>
<svg class="a" style="left:3351.8px;top:2013.2px" width="11.2" height="6.6"><path d="M1,1 L5.6,5.6 L10.2,1" fill="none" stroke="#444" stroke-width="1.1"/></svg>
<div class="a" style="left:3802.6px;top:2003.6px;width:24.8px;height:24.7px;background:#fbfbfb;border:1px solid #dadada;box-sizing:border-box;border-radius:3px;"></div>
<svg class="a" style="left:3806px;top:2008px" width="18" height="16" viewBox="3806 2008 18 16"><path d="M3808,2010.5 L3821,2016.8 L3808,2022.8 L3811.5,2016.8 Z" fill="#000"/></svg>
<div class="a" style="left:3262.3px;top:2039.0px;width:571.6px;height:26.7px;background:#e7f3e7;border-radius:6px;"></div>
<div class="a" style="left:3272.9px;top:2051.8px;width:6px;height:6px;border-radius:50%;background:#4caf50"></div>
<div class="t" style="left:3306.4px;top:2047.66px;font-size:12.1px;color:#2e7d32;font-weight:bold;">Ready</div>
<div class="a" style="left:3266.1px;top:2075.2px;width:12.8px;height:12.7px;background:#ffffff;border:1px solid #555;box-sizing:border-box;border-radius:2.5px;"></div>
<div class="t" style="left:3285.3px;top:2076.67px;font-size:10.9px;color:#111;font-weight:normal;">FFXIV</div>
<div class="a" style="left:3599.7px;top:2073.0px;width:125.3px;height:18.5px;background:#fdfdfd;border:1px solid #d7d7d7;box-sizing:border-box;border-radius:2.5px;border-bottom:1.5px solid #777"></div>
<div class="t" style="left:3604.6px;top:2078.13px;font-size:10.0px;color:#000;font-weight:normal;">gpt-5.4</div>
<svg class="a" style="left:3709.0px;top:2079.2px" width="11.0" height="6.6"><path d="M1,1 L5.5,5.6 L10.0,1" fill="none" stroke="#444" stroke-width="1.1"/></svg>
<div class="a" style="left:3732.2px;top:2073.0px;width:71.4px;height:18.5px;background:#fdfdfd;border:1px solid #d7d7d7;box-sizing:border-box;border-radius:2.5px;"></div>
<svg class="a" style="left:3736px;top:2076px" width="16" height="14" viewBox="3736 2076 16 14"><path d="M3739,2078.3 H3748 L3750,2082 L3748,2085.5 H3741.5 L3739,2088.3 L3739.5,2085.5 L3737.5,2082 Z" fill="#ddd6ee" stroke="#222" stroke-width="0.9" stroke-dasharray="2.2,1"/></svg>
<div class="t" style="left:3754.6px;top:2077.97px;font-size:10.2px;color:#000;font-weight:normal;">med</div>
<svg class="a" style="left:3786.5px;top:2079.2px" width="11.0" height="6.6"><path d="M1,1 L5.5,5.6 L10.0,1" fill="none" stroke="#444" stroke-width="1.1"/></svg>
<svg class="a" style="left:3812px;top:2075px" width="16" height="15" viewBox="3812 2075 16 15"><g fill="#a9a2b8"><circle cx="3820" cy="2082.2" r="4.6"/>
<rect x="3818.6" y="2076.2" width="2.8" height="12" rx="0.6"/><rect x="3814" y="2080.8" width="12" height="2.8" rx="0.6"/>
<rect x="3818.6" y="2076.2" width="2.8" height="12" rx="0.6" transform="rotate(45 3820 2082.2)"/><rect x="3818.6" y="2076.2" width="2.8" height="12" rx="0.6" transform="rotate(-45 3820 2082.2)"/></g><circle cx="3820" cy="2082.2" r="2" fill="#eee"/></svg>
<div class="a" style="left:3246.0px;top:84.0px;width:3.0px;height:2014.0px;background:#f1f1f1;border-radius:0px;"></div>
<div class="a" style="left:14.7px;top:1810.7px;width:80.3px;height:23.5px;background:#ffffff;border:1px solid #d4d4d4;box-sizing:border-box;border-radius:2.5px;border-bottom:1.5px solid #b8b8b8"></div>
<div class="t" style="left:17.9px;top:1816.20px;font-size:15.0px;color:#000;font-weight:normal;">Velocity</div>
<svg class="a" style="left:78.8px;top:1818.9px" width="11.2" height="7.1"><path d="M1,1 L5.6,6.1 L10.2,1" fill="none" stroke="#444" stroke-width="1.1"/></svg>
<div class="a" style="left:14.9px;top:1843.0px;width:80.1px;height:22.8px;background:#f9f9f9;border:1px solid #ececec;box-sizing:border-box;border-radius:2.5px;"></div>
<div class="a" style="left:18.4px;top:1847px;width:53.7px;height:18px;overflow:hidden"><div class="t" style="left:0.0px;top:1.46px;font-size:14.7px;color:#6d6d6d;font-weight:normal;">0: Bank Select</div></div>
<svg class="a" style="left:78.9px;top:1850.9px" width="11.1" height="7.0"><path d="M1,1 L5.5,6.0 L10.1,1" fill="none" stroke="#8a8a8a" stroke-width="1.1"/></svg>
<div class="a" style="left:14.9px;top:1875.0px;width:80.1px;height:22.9px;background:#f9f9f9;border:1px solid #ececec;box-sizing:border-box;border-radius:2.5px;"></div>
<div class="t" style="left:18.4px;top:1880.56px;font-size:14.7px;color:#6d6d6d;font-weight:normal;">Channel</div>
<svg class="a" style="left:78.9px;top:1883.0px" width="11.1" height="7.0"><path d="M1,1 L5.5,6.0 L10.1,1" fill="none" stroke="#8a8a8a" stroke-width="1.1"/></svg>
<div class="a" style="left:15.1px;top:2037.2px;width:24.8px;height:23.5px;background:#cce4f7;border:1.2px solid #0a5aa5;box-sizing:border-box;border-radius:3.5px;"></div>
<div class="a" style="left:43.5px;top:2037.2px;width:23.8px;height:23.5px;background:#fdfdfd;border:1px solid #d2d2d2;box-sizing:border-box;border-radius:3.5px;"></div>
<div class="a" style="left:70.3px;top:2037.2px;width:24.1px;height:23.5px;background:#fdfdfd;border:1px solid #d2d2d2;box-sizing:border-box;border-radius:3.5px;"></div>
<svg class="a" style="left:0;top:2030px" width="100" height="40" viewBox="0 2030 100 40">
<path d="M21.9,2040.1 L23.2,2056 L26.3,2053.2 L29,2059.5 L31.8,2058.3 L29.2,2052.2 L32.9,2051.6 Z" fill="#000"/>
<path d="M45.8,2058 C48,2054 48.3,2048 49,2045.5 C49.6,2043 51.5,2042.8 53,2044.6 C54.6,2046.4 55.4,2049.6 57.4,2049.3 C59.2,2049 59.8,2045 61.3,2043 C62.2,2041.6 63,2041 64,2040.6" fill="none" stroke="#000" stroke-width="1.5" stroke-linecap="round"/>
<path d="M72.6,2057.8 L91.1,2040.2" stroke="#000" stroke-width="1.6" stroke-linecap="round"/></svg>
</body></html>
